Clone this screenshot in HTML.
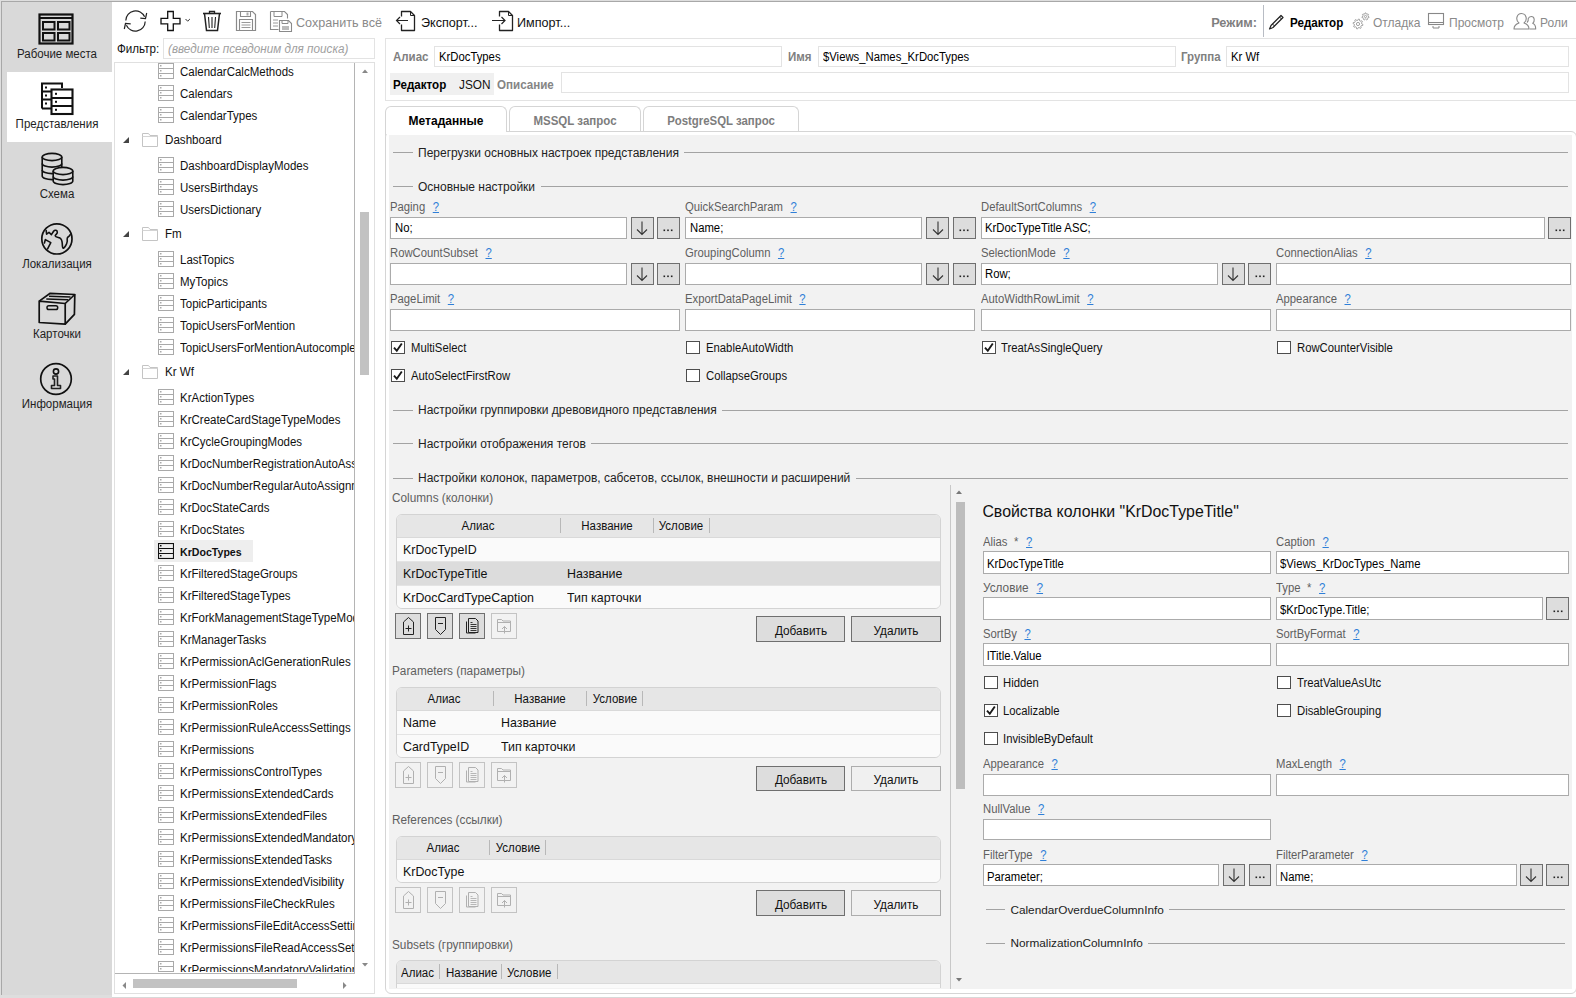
<!DOCTYPE html><html><head><meta charset="utf-8"><style>
html,body{margin:0;padding:0;width:1576px;height:998px;overflow:hidden;background:#fff;}
body{position:relative;font-family:"Liberation Sans",sans-serif;}
.t{position:absolute;white-space:nowrap;}
.r{position:absolute;}
</style></head><body><div class="r" style="left:0.00px;top:0.00px;width:1576.00px;height:998.00px;background:#ffffff;"></div><div class="r" style="left:0.00px;top:0.00px;width:112.00px;height:998.00px;background:#d9d9d9;"></div><div class="r" style="left:0.00px;top:0.00px;width:1.00px;height:998.00px;background:#dedede;"></div><div class="r" style="left:1.00px;top:1.00px;width:1.00px;height:994.00px;background:#a8a8a8;"></div><div class="r" style="left:7.00px;top:72.00px;width:105.00px;height:70.00px;background:#ffffff;"></div><div class="t" style="left:-143.00px;width:400px;text-align:center;transform-origin:50% 0;top:48.44px;font-size:12.00px;line-height:12.00px;color:#1e1e1e;font-weight:400;transform:scaleX(0.9583);">Рабочие места</div><div class="t" style="left:-143.00px;width:400px;text-align:center;transform-origin:50% 0;top:118.44px;font-size:12.00px;line-height:12.00px;color:#1e1e1e;font-weight:400;transform:scaleX(0.9583);">Представления</div><div class="t" style="left:-143.00px;width:400px;text-align:center;transform-origin:50% 0;top:188.44px;font-size:12.00px;line-height:12.00px;color:#1e1e1e;font-weight:400;transform:scaleX(0.9583);">Схема</div><div class="t" style="left:-143.00px;width:400px;text-align:center;transform-origin:50% 0;top:258.44px;font-size:12.00px;line-height:12.00px;color:#1e1e1e;font-weight:400;transform:scaleX(0.9583);">Локализация</div><div class="t" style="left:-143.00px;width:400px;text-align:center;transform-origin:50% 0;top:328.44px;font-size:12.00px;line-height:12.00px;color:#1e1e1e;font-weight:400;transform:scaleX(0.9583);">Карточки</div><div class="t" style="left:-143.00px;width:400px;text-align:center;transform-origin:50% 0;top:398.44px;font-size:12.00px;line-height:12.00px;color:#1e1e1e;font-weight:400;transform:scaleX(0.9583);">Информация</div><svg class="r" style="left:38px;top:13px" width="36" height="32" viewBox="0 0 36 32" fill="none"><rect x="1.5" y="1.5" width="33" height="29" stroke="#111" stroke-width="2.2"/>
<line x1="1.5" y1="5" x2="34.5" y2="5" stroke="#111" stroke-width="2"/>
<rect x="5" y="9" width="11.5" height="7.5" stroke="#111" stroke-width="2"/>
<rect x="20" y="9" width="11.5" height="7.5" stroke="#111" stroke-width="2"/>
<rect x="5" y="20" width="11.5" height="7.5" stroke="#111" stroke-width="2"/>
<rect x="20" y="20" width="11.5" height="7.5" stroke="#111" stroke-width="2"/></svg><svg class="r" style="left:41px;top:82px" width="34" height="34" viewBox="0 0 34 34" fill="none"><g stroke="#111" stroke-width="2" fill="none">
<path d="M1 26.5V1.5H21V6"/><path d="M1 26.5H10M1 9.5H10M1 17.5H10"/>
<rect x="10.5" y="7.5" width="21" height="24.5" stroke-width="2.1"/>
<path d="M10.5 16H31.5M10.5 24H31.5"/></g>
<g fill="#111"><rect x="4" y="4.5" width="2" height="2"/><rect x="4" y="12.5" width="2" height="2"/><rect x="4" y="20.5" width="2" height="2"/>
<rect x="14" y="10.8" width="2" height="2"/><rect x="14" y="18.8" width="2" height="2"/><rect x="14" y="26.8" width="2" height="2"/></g></svg><svg class="r" style="left:41px;top:152px" width="34" height="34" viewBox="0 0 34 34" fill="none"><g stroke="#111" stroke-width="1.6" fill="#d9d9d9">
<path d="M1.2 5v19c0 2 4.4 3.6 9.8 3.6s9.8-1.6 9.8-3.6V5"/>
<ellipse cx="11" cy="5" rx="9.8" ry="3.6"/>
<path d="M1.2 11.5c0 2 4.4 3.6 9.8 3.6s9.8-1.6 9.8-3.6M1.2 18c0 2 4.4 3.6 9.8 3.6s9.8-1.6 9.8-3.6" fill="none"/>
<path d="M12.2 19v10c0 2 4.4 3.6 9.8 3.6s9.8-1.6 9.8-3.6V19"/>
<ellipse cx="22" cy="19" rx="9.8" ry="3.6"/>
<path d="M12.2 24.5c0 2 4.4 3.6 9.8 3.6s9.8-1.6 9.8-3.6" fill="none"/>
</g></svg><svg class="r" style="left:40px;top:222px" width="34" height="34" viewBox="0 0 34 34" fill="none"><circle cx="16.9" cy="16.9" r="15.1" stroke="#111" stroke-width="1.7"/>
<path d="M6.2 8.6L6.6 12.2 9 10.4 11.4 12.6 13.6 9.2C14.8 7.6 17.6 8 17.3 10.6 17.1 12 15.4 12.6 15.2 13.8 15.4 15 18 15.3 19.5 15.8 21.8 16.8 22.2 19.5 22.3 22 22.4 24 22.2 26 23.4 26.3 24.6 25.6 26.8 22.5 27.2 19.5 27.6 17.8 26.3 16.2 28 15 29.2 14.2 29.8 13.4 30.2 12.6" stroke="#111" stroke-width="1.6" fill="none" stroke-linejoin="round" stroke-linecap="round"/>
<path d="M4.4 21L5.4 17.6 10.8 20.6 7.6 26.8" stroke="#111" stroke-width="1.6" fill="none" stroke-linejoin="round" stroke-linecap="round"/></svg><svg class="r" style="left:38px;top:292px" width="40" height="34" viewBox="0 0 40 34" fill="none"><g stroke="#111" stroke-width="1.7" fill="none" stroke-linejoin="round">
<path d="M1.2 9.1L27.2 11.5 27.2 32.2 1.2 30.5Z"/>
<path d="M1.2 9.1L12.2 1.3 36.8 2.5 27.2 11.5"/>
<path d="M36.8 2.5L36.4 22.4 27.2 32.2"/>
<path d="M11 4.3L32.5 5.1M8.3 6.9L30 7.7" stroke-width="1.5"/>
<rect x="9" y="13.8" width="10.7" height="3.7" rx="1.8" stroke-width="1.5"/></g></svg><svg class="r" style="left:39px;top:362px" width="34" height="34" viewBox="0 0 34 34" fill="none"><circle cx="17" cy="17" r="15.3" stroke="#111" stroke-width="1.7"/>
<circle cx="17" cy="9.5" r="2.6" stroke="#111" stroke-width="1.6"/>
<path d="M14 14h4.5v9.5h3v3h-9v-3h3v-6.5h-1.5z" stroke="#222" stroke-width="1.6" fill="none" stroke-linejoin="round"/></svg><div class="r" style="left:0.00px;top:0.00px;width:1576.00px;height:1.00px;background:#dedede;"></div><div class="r" style="left:1.00px;top:1.00px;width:1575.00px;height:1.00px;background:#a8a8a8;"></div><div class="r" style="left:0.00px;top:995.00px;width:112.00px;height:3.00px;background:#dedede;"></div><svg class="r" style="left:122px;top:10px" width="28" height="22" viewBox="0 0 28 22" fill="none"><path d="M3.8 10.5A9.8 9.8 0 0 1 22.6 6.8" stroke="#222" stroke-width="1.2" fill="none"/>
<path d="M23.2 11.5A9.8 9.8 0 0 1 4.4 15.2" stroke="#222" stroke-width="1.2" fill="none"/>
<path d="M18.3 8.2l5.2 0.3 1.2-5.5" stroke="#222" stroke-width="1.2" fill="none"/>
<path d="M8.7 13.8l-5.2-0.3-1.2 5.5" stroke="#222" stroke-width="1.2" fill="none"/></svg><svg class="r" style="left:160px;top:10px" width="32" height="22" viewBox="0 0 32 22" fill="none"><path d="M7.7 1.5h5.6v6.8h6.7v5.5h-6.7v6.7h-5.6v-6.7h-6.7v-5.5h6.7z" stroke="#111" stroke-width="1.3" fill="#fff" stroke-linejoin="miter"/>
<path d="M25.5 9l2.2 2.2 2.2-2.2" stroke="#333" stroke-width="1" fill="none"/></svg><svg class="r" style="left:201px;top:10px" width="22" height="22" viewBox="0 0 22 22" fill="none"><path d="M2 3.5h18" stroke="#222" stroke-width="1.6"/>
<path d="M8.5 3.5V1.5h5v2" stroke="#222" stroke-width="1.3" fill="none"/>
<path d="M3.5 3.5l2 17h11l2-17" stroke="#222" stroke-width="1.5" fill="none"/>
<path d="M7.5 7l0.8 11M11 7v11M14.5 7l-0.8 11" stroke="#222" stroke-width="1.1"/></svg><svg class="r" style="left:235px;top:10px" width="22" height="22" viewBox="0 0 22 22" fill="none"><path d="M1.5 1.5h16l3 3v16h-19z" stroke="#8a8a8a" stroke-width="1.2" fill="#fff"/>
<path d="M5.5 1.5v5h10v-5" stroke="#8a8a8a" stroke-width="1.1" fill="none"/>
<rect x="11.5" y="2.5" width="2" height="3" fill="#aaa"/>
<path d="M4.5 20.5v-11h13v11" stroke="#8a8a8a" stroke-width="1.1" fill="none"/>
<path d="M6.5 12.5h9M6.5 15h9M6.5 17.5h9" stroke="#9a9a9a" stroke-width="1"/></svg><svg class="r" style="left:269px;top:10px" width="24" height="22" viewBox="0 0 24 22" fill="none"><path d="M1.5 1.5h14l3 3v4" stroke="#8a8a8a" stroke-width="1.1" fill="none"/>
<path d="M1.5 1.5v18h8" stroke="#8a8a8a" stroke-width="1.1" fill="none"/>
<path d="M5 1.5v5h8v-5" stroke="#8a8a8a" stroke-width="1" fill="none"/>
<path d="M4 10h5M4 13h5M4 16h5" stroke="#9a9a9a" stroke-width="1"/>
<path d="M10.5 10.5h9l3 3v8h-12z" stroke="#8a8a8a" stroke-width="1.1" fill="#fff"/>
<path d="M13 10.5v3h6v-3" stroke="#8a8a8a" stroke-width="1" fill="none"/>
<rect x="13" y="16" width="7" height="4" fill="#bbb"/></svg><div class="t" style="left:296.00px;transform-origin:0 0;top:15.60px;font-size:13.00px;line-height:13.00px;color:#8a8a8a;font-weight:400;transform:scaleX(0.9692);">Сохранить всё</div><svg class="r" style="left:395px;top:10px" width="22" height="22" viewBox="0 0 22 22" fill="none"><path d="M6.5 6.5v-5h9l4 4v15h-13v-6" stroke="#222" stroke-width="1.3" fill="none" stroke-linejoin="round"/>
<path d="M15.5 1.5v4h4" stroke="#222" stroke-width="1" fill="none"/>
<path d="M13 10.5H1.5M5 7l-3.5 3.5L5 14" stroke="#222" stroke-width="1.2" fill="none"/></svg><div class="t" style="left:421.00px;transform-origin:0 0;top:15.60px;font-size:13.00px;line-height:13.00px;color:#111;font-weight:400;transform:scaleX(0.9692);">Экспорт...</div><svg class="r" style="left:491px;top:10px" width="23" height="22" viewBox="0 0 23 22" fill="none"><path d="M8.5 6.5v-5h9l4 4v15h-13v-6" stroke="#222" stroke-width="1.3" fill="none" stroke-linejoin="round"/>
<path d="M17.5 1.5v4h4" stroke="#222" stroke-width="1" fill="none"/>
<path d="M1 10.5h13M10.5 7l3.5 3.5-3.5 3.5" stroke="#222" stroke-width="1.2" fill="none"/></svg><div class="t" style="left:517.00px;transform-origin:0 0;top:15.60px;font-size:13.00px;line-height:13.00px;color:#111;font-weight:400;transform:scaleX(0.9692);">Импорт...</div><div class="t" style="left:857.00px;width:400px;text-align:right;transform-origin:100% 0;top:16.10px;font-size:13.00px;line-height:13.00px;color:#7f7f7f;font-weight:700;transform:scaleX(0.9846);">Режим:</div><div class="r" style="left:1263.00px;top:5.00px;width:1.00px;height:32.00px;background:#b8bcc4;"></div><svg class="r" style="left:1268px;top:12px" width="18" height="18" viewBox="0 0 18 18" fill="none"><path d="M3 13.5L13 3.5l2 2-10 10-3.5 1.5z" stroke="#222" stroke-width="1.2" fill="#fff" stroke-linejoin="round"/>
<path d="M11.5 5l2 2M4.5 12l2 2" stroke="#222" stroke-width="1"/></svg><div class="t" style="left:1289.50px;transform-origin:0 0;top:16.94px;font-size:12.00px;line-height:12.00px;color:#000;font-weight:700;transform:scaleX(0.9667);">Редактор</div><svg class="r" style="left:1352px;top:12px" width="18" height="18" viewBox="0 0 18 18" fill="none"><path d="M10.98 12.49 L10.78 13.45 L9.17 13.70 L8.78 14.28 L9.17 15.87 L8.36 16.41 L7.05 15.44 L6.35 15.58 L5.51 16.98 L4.55 16.78 L4.30 15.17 L3.72 14.78 L2.13 15.17 L1.59 14.36 L2.56 13.05 L2.42 12.35 L1.02 11.51 L1.22 10.55 L2.83 10.30 L3.22 9.72 L2.83 8.13 L3.64 7.59 L4.95 8.56 L5.65 8.42 L6.49 7.02 L7.45 7.22 L7.70 8.83 L8.28 9.22 L9.87 8.83 L10.41 9.64 L9.44 10.95 L9.58 11.65Z" stroke="#999" stroke-width="0.9" fill="none" stroke-linejoin="round"/><circle cx="6" cy="12" r="1.6" stroke="#999" stroke-width="0.9"/><path d="M17.08 4.90 L16.90 5.69 L15.70 5.88 L15.34 6.34 L15.42 7.55 L14.69 7.90 L13.79 7.08 L13.21 7.08 L12.31 7.90 L11.58 7.55 L11.66 6.34 L11.30 5.88 L10.10 5.69 L9.92 4.90 L10.92 4.21 L11.05 3.64 L10.45 2.58 L10.95 1.95 L12.12 2.30 L12.64 2.05 L13.10 0.92 L13.90 0.92 L14.36 2.05 L14.88 2.30 L16.05 1.95 L16.55 2.58 L15.95 3.64 L16.08 4.21Z" stroke="#999" stroke-width="0.9" fill="none" stroke-linejoin="round"/><circle cx="13.5" cy="4.5" r="1.1" stroke="#999" stroke-width="0.9"/></svg><div class="t" style="left:1373.00px;transform-origin:0 0;top:16.10px;font-size:13.00px;line-height:13.00px;color:#8a8a8a;font-weight:400;transform:scaleX(0.9231);">Отладка</div><svg class="r" style="left:1427px;top:12px" width="18" height="18" viewBox="0 0 18 18" fill="none"><rect x="1.5" y="1.5" width="15" height="11" stroke="#888" stroke-width="1.1" fill="#fff"/>
<path d="M1.5 10.5h15" stroke="#888" stroke-width="1"/>
<path d="M6 14v2h6v-2" stroke="#888" stroke-width="1" fill="none"/></svg><div class="t" style="left:1448.60px;transform-origin:0 0;top:16.10px;font-size:13.00px;line-height:13.00px;color:#8a8a8a;font-weight:400;transform:scaleX(0.9231);">Просмотр</div><svg class="r" style="left:1513px;top:12px" width="24" height="18" viewBox="0 0 24 18" fill="none"><path d="M1 17c0-3 2-5 5-6-2-1.5-2.5-4-2-6 0.7-2.5 2.5-3.5 4.5-3.5s3.8 1 4.5 3.5c0.5 2 0 4.5-2 6 3 1 5 3 5 6z" stroke="#888" stroke-width="1.1" fill="#fff" stroke-linejoin="round"/>
<path d="M14 10.5c1-1 1.5-2.5 1.2-3.8 0.5-1.5 1.8-2.2 3-2.2 1.6 0 2.8 1.2 3 2.8 0.2 1.5-0.3 3-1.5 4 2 0.8 3 2.5 3 5.7h-6" stroke="#888" stroke-width="1.1" fill="none" stroke-linejoin="round"/></svg><div class="t" style="left:1540.00px;transform-origin:0 0;top:16.10px;font-size:13.00px;line-height:13.00px;color:#8a8a8a;font-weight:400;transform:scaleX(0.9231);">Роли</div><div class="t" style="left:117.00px;transform-origin:0 0;top:42.94px;font-size:12.00px;line-height:12.00px;color:#111;font-weight:400;transform:scaleX(0.9667);">Фильтр:</div><div class="r" style="left:163.00px;top:37.50px;width:211.50px;height:21.50px;background:#fff;border:1px solid #e3e3e3;box-sizing:border-box;"></div><div class="t" style="left:168.00px;transform-origin:0 0;top:42.94px;font-size:12.00px;line-height:12.00px;color:#a0a0a0;font-weight:400;transform:scaleX(0.9750);font-style:italic;">(введите псевдоним для поиска)</div><div class="r" style="left:114.00px;top:62.00px;width:261.00px;height:932.00px;background:#fff;border:1px solid #e0e0e0;box-sizing:border-box;"></div><div class="r" style="left:115px;top:63px;width:239.5px;height:909px;overflow:hidden;"><svg class="r" style="left:43px;top:0px" width="16" height="16" viewBox="0 0 16 16" fill="none"><rect x="0.5" y="0.5" width="15" height="15" stroke="#a9a9a9" stroke-width="1"/><path d="M0.5 5.5h15M0.5 10.5h15" stroke="#a9a9a9" stroke-width="1"/><rect x="2" y="2" width="1.5" height="1.5" fill="#a9a9a9"/><rect x="2" y="7" width="1.5" height="1.5" fill="#a9a9a9"/><rect x="2" y="12" width="1.5" height="1.5" fill="#a9a9a9"/></svg><div class="t" style="left:65px;top:3.34px;font-size:12.00px;line-height:12.00px;color:#111;font-weight:400;transform-origin:0 0;transform:scaleX(0.9583)">CalendarCalcMethods</div><svg class="r" style="left:43px;top:22px" width="16" height="16" viewBox="0 0 16 16" fill="none"><rect x="0.5" y="0.5" width="15" height="15" stroke="#a9a9a9" stroke-width="1"/><path d="M0.5 5.5h15M0.5 10.5h15" stroke="#a9a9a9" stroke-width="1"/><rect x="2" y="2" width="1.5" height="1.5" fill="#a9a9a9"/><rect x="2" y="7" width="1.5" height="1.5" fill="#a9a9a9"/><rect x="2" y="12" width="1.5" height="1.5" fill="#a9a9a9"/></svg><div class="t" style="left:65px;top:25.34px;font-size:12.00px;line-height:12.00px;color:#111;font-weight:400;transform-origin:0 0;transform:scaleX(0.9583)">Calendars</div><svg class="r" style="left:43px;top:44px" width="16" height="16" viewBox="0 0 16 16" fill="none"><rect x="0.5" y="0.5" width="15" height="15" stroke="#a9a9a9" stroke-width="1"/><path d="M0.5 5.5h15M0.5 10.5h15" stroke="#a9a9a9" stroke-width="1"/><rect x="2" y="2" width="1.5" height="1.5" fill="#a9a9a9"/><rect x="2" y="7" width="1.5" height="1.5" fill="#a9a9a9"/><rect x="2" y="12" width="1.5" height="1.5" fill="#a9a9a9"/></svg><div class="t" style="left:65px;top:47.34px;font-size:12.00px;line-height:12.00px;color:#111;font-weight:400;transform-origin:0 0;transform:scaleX(0.9583)">CalendarTypes</div><svg class="r" style="left:7px;top:73px" width="8" height="8" viewBox="0 0 8 8"><path d="M7 1v6H1z" fill="#444"/></svg><svg class="r" style="left:27px;top:70px" width="16" height="14" viewBox="0 0 16 14" fill="none"><path d="M0.5 13.5V0.5h6l1.5 2h7.5v11z" stroke="#c4c4c4" stroke-width="1" fill="#fff"/><path d="M0.5 3.5h15" stroke="#d4d4d4" stroke-width="1"/></svg><div class="t" style="left:49.5px;top:70.84px;font-size:12px;line-height:12px;color:#111;transform-origin:0 0;transform:scaleX(0.9667)">Dashboard</div><svg class="r" style="left:43px;top:94px" width="16" height="16" viewBox="0 0 16 16" fill="none"><rect x="0.5" y="0.5" width="15" height="15" stroke="#a9a9a9" stroke-width="1"/><path d="M0.5 5.5h15M0.5 10.5h15" stroke="#a9a9a9" stroke-width="1"/><rect x="2" y="2" width="1.5" height="1.5" fill="#a9a9a9"/><rect x="2" y="7" width="1.5" height="1.5" fill="#a9a9a9"/><rect x="2" y="12" width="1.5" height="1.5" fill="#a9a9a9"/></svg><div class="t" style="left:65px;top:97.34px;font-size:12.00px;line-height:12.00px;color:#111;font-weight:400;transform-origin:0 0;transform:scaleX(0.9583)">DashboardDisplayModes</div><svg class="r" style="left:43px;top:116px" width="16" height="16" viewBox="0 0 16 16" fill="none"><rect x="0.5" y="0.5" width="15" height="15" stroke="#a9a9a9" stroke-width="1"/><path d="M0.5 5.5h15M0.5 10.5h15" stroke="#a9a9a9" stroke-width="1"/><rect x="2" y="2" width="1.5" height="1.5" fill="#a9a9a9"/><rect x="2" y="7" width="1.5" height="1.5" fill="#a9a9a9"/><rect x="2" y="12" width="1.5" height="1.5" fill="#a9a9a9"/></svg><div class="t" style="left:65px;top:119.34px;font-size:12.00px;line-height:12.00px;color:#111;font-weight:400;transform-origin:0 0;transform:scaleX(0.9583)">UsersBirthdays</div><svg class="r" style="left:43px;top:138px" width="16" height="16" viewBox="0 0 16 16" fill="none"><rect x="0.5" y="0.5" width="15" height="15" stroke="#a9a9a9" stroke-width="1"/><path d="M0.5 5.5h15M0.5 10.5h15" stroke="#a9a9a9" stroke-width="1"/><rect x="2" y="2" width="1.5" height="1.5" fill="#a9a9a9"/><rect x="2" y="7" width="1.5" height="1.5" fill="#a9a9a9"/><rect x="2" y="12" width="1.5" height="1.5" fill="#a9a9a9"/></svg><div class="t" style="left:65px;top:141.34px;font-size:12.00px;line-height:12.00px;color:#111;font-weight:400;transform-origin:0 0;transform:scaleX(0.9583)">UsersDictionary</div><svg class="r" style="left:7px;top:167px" width="8" height="8" viewBox="0 0 8 8"><path d="M7 1v6H1z" fill="#444"/></svg><svg class="r" style="left:27px;top:164px" width="16" height="14" viewBox="0 0 16 14" fill="none"><path d="M0.5 13.5V0.5h6l1.5 2h7.5v11z" stroke="#c4c4c4" stroke-width="1" fill="#fff"/><path d="M0.5 3.5h15" stroke="#d4d4d4" stroke-width="1"/></svg><div class="t" style="left:49.5px;top:164.84px;font-size:12px;line-height:12px;color:#111;transform-origin:0 0;transform:scaleX(0.9667)">Fm</div><svg class="r" style="left:43px;top:188px" width="16" height="16" viewBox="0 0 16 16" fill="none"><rect x="0.5" y="0.5" width="15" height="15" stroke="#a9a9a9" stroke-width="1"/><path d="M0.5 5.5h15M0.5 10.5h15" stroke="#a9a9a9" stroke-width="1"/><rect x="2" y="2" width="1.5" height="1.5" fill="#a9a9a9"/><rect x="2" y="7" width="1.5" height="1.5" fill="#a9a9a9"/><rect x="2" y="12" width="1.5" height="1.5" fill="#a9a9a9"/></svg><div class="t" style="left:65px;top:191.34px;font-size:12.00px;line-height:12.00px;color:#111;font-weight:400;transform-origin:0 0;transform:scaleX(0.9583)">LastTopics</div><svg class="r" style="left:43px;top:210px" width="16" height="16" viewBox="0 0 16 16" fill="none"><rect x="0.5" y="0.5" width="15" height="15" stroke="#a9a9a9" stroke-width="1"/><path d="M0.5 5.5h15M0.5 10.5h15" stroke="#a9a9a9" stroke-width="1"/><rect x="2" y="2" width="1.5" height="1.5" fill="#a9a9a9"/><rect x="2" y="7" width="1.5" height="1.5" fill="#a9a9a9"/><rect x="2" y="12" width="1.5" height="1.5" fill="#a9a9a9"/></svg><div class="t" style="left:65px;top:213.34px;font-size:12.00px;line-height:12.00px;color:#111;font-weight:400;transform-origin:0 0;transform:scaleX(0.9583)">MyTopics</div><svg class="r" style="left:43px;top:232px" width="16" height="16" viewBox="0 0 16 16" fill="none"><rect x="0.5" y="0.5" width="15" height="15" stroke="#a9a9a9" stroke-width="1"/><path d="M0.5 5.5h15M0.5 10.5h15" stroke="#a9a9a9" stroke-width="1"/><rect x="2" y="2" width="1.5" height="1.5" fill="#a9a9a9"/><rect x="2" y="7" width="1.5" height="1.5" fill="#a9a9a9"/><rect x="2" y="12" width="1.5" height="1.5" fill="#a9a9a9"/></svg><div class="t" style="left:65px;top:235.34px;font-size:12.00px;line-height:12.00px;color:#111;font-weight:400;transform-origin:0 0;transform:scaleX(0.9583)">TopicParticipants</div><svg class="r" style="left:43px;top:254px" width="16" height="16" viewBox="0 0 16 16" fill="none"><rect x="0.5" y="0.5" width="15" height="15" stroke="#a9a9a9" stroke-width="1"/><path d="M0.5 5.5h15M0.5 10.5h15" stroke="#a9a9a9" stroke-width="1"/><rect x="2" y="2" width="1.5" height="1.5" fill="#a9a9a9"/><rect x="2" y="7" width="1.5" height="1.5" fill="#a9a9a9"/><rect x="2" y="12" width="1.5" height="1.5" fill="#a9a9a9"/></svg><div class="t" style="left:65px;top:257.34px;font-size:12.00px;line-height:12.00px;color:#111;font-weight:400;transform-origin:0 0;transform:scaleX(0.9583)">TopicUsersForMention</div><svg class="r" style="left:43px;top:276px" width="16" height="16" viewBox="0 0 16 16" fill="none"><rect x="0.5" y="0.5" width="15" height="15" stroke="#a9a9a9" stroke-width="1"/><path d="M0.5 5.5h15M0.5 10.5h15" stroke="#a9a9a9" stroke-width="1"/><rect x="2" y="2" width="1.5" height="1.5" fill="#a9a9a9"/><rect x="2" y="7" width="1.5" height="1.5" fill="#a9a9a9"/><rect x="2" y="12" width="1.5" height="1.5" fill="#a9a9a9"/></svg><div class="t" style="left:65px;top:279.34px;font-size:12.00px;line-height:12.00px;color:#111;font-weight:400;transform-origin:0 0;transform:scaleX(0.9583)">TopicUsersForMentionAutocomplete</div><svg class="r" style="left:7px;top:305px" width="8" height="8" viewBox="0 0 8 8"><path d="M7 1v6H1z" fill="#444"/></svg><svg class="r" style="left:27px;top:302px" width="16" height="14" viewBox="0 0 16 14" fill="none"><path d="M0.5 13.5V0.5h6l1.5 2h7.5v11z" stroke="#c4c4c4" stroke-width="1" fill="#fff"/><path d="M0.5 3.5h15" stroke="#d4d4d4" stroke-width="1"/></svg><div class="t" style="left:49.5px;top:302.84px;font-size:12px;line-height:12px;color:#111;transform-origin:0 0;transform:scaleX(0.9667)">Kr Wf</div><svg class="r" style="left:43px;top:326px" width="16" height="16" viewBox="0 0 16 16" fill="none"><rect x="0.5" y="0.5" width="15" height="15" stroke="#a9a9a9" stroke-width="1"/><path d="M0.5 5.5h15M0.5 10.5h15" stroke="#a9a9a9" stroke-width="1"/><rect x="2" y="2" width="1.5" height="1.5" fill="#a9a9a9"/><rect x="2" y="7" width="1.5" height="1.5" fill="#a9a9a9"/><rect x="2" y="12" width="1.5" height="1.5" fill="#a9a9a9"/></svg><div class="t" style="left:65px;top:329.34px;font-size:12.00px;line-height:12.00px;color:#111;font-weight:400;transform-origin:0 0;transform:scaleX(0.9583)">KrActionTypes</div><svg class="r" style="left:43px;top:348px" width="16" height="16" viewBox="0 0 16 16" fill="none"><rect x="0.5" y="0.5" width="15" height="15" stroke="#a9a9a9" stroke-width="1"/><path d="M0.5 5.5h15M0.5 10.5h15" stroke="#a9a9a9" stroke-width="1"/><rect x="2" y="2" width="1.5" height="1.5" fill="#a9a9a9"/><rect x="2" y="7" width="1.5" height="1.5" fill="#a9a9a9"/><rect x="2" y="12" width="1.5" height="1.5" fill="#a9a9a9"/></svg><div class="t" style="left:65px;top:351.34px;font-size:12.00px;line-height:12.00px;color:#111;font-weight:400;transform-origin:0 0;transform:scaleX(0.9583)">KrCreateCardStageTypeModes</div><svg class="r" style="left:43px;top:370px" width="16" height="16" viewBox="0 0 16 16" fill="none"><rect x="0.5" y="0.5" width="15" height="15" stroke="#a9a9a9" stroke-width="1"/><path d="M0.5 5.5h15M0.5 10.5h15" stroke="#a9a9a9" stroke-width="1"/><rect x="2" y="2" width="1.5" height="1.5" fill="#a9a9a9"/><rect x="2" y="7" width="1.5" height="1.5" fill="#a9a9a9"/><rect x="2" y="12" width="1.5" height="1.5" fill="#a9a9a9"/></svg><div class="t" style="left:65px;top:373.34px;font-size:12.00px;line-height:12.00px;color:#111;font-weight:400;transform-origin:0 0;transform:scaleX(0.9583)">KrCycleGroupingModes</div><svg class="r" style="left:43px;top:392px" width="16" height="16" viewBox="0 0 16 16" fill="none"><rect x="0.5" y="0.5" width="15" height="15" stroke="#a9a9a9" stroke-width="1"/><path d="M0.5 5.5h15M0.5 10.5h15" stroke="#a9a9a9" stroke-width="1"/><rect x="2" y="2" width="1.5" height="1.5" fill="#a9a9a9"/><rect x="2" y="7" width="1.5" height="1.5" fill="#a9a9a9"/><rect x="2" y="12" width="1.5" height="1.5" fill="#a9a9a9"/></svg><div class="t" style="left:65px;top:395.34px;font-size:12.00px;line-height:12.00px;color:#111;font-weight:400;transform-origin:0 0;transform:scaleX(0.9583)">KrDocNumberRegistrationAutoAssignment</div><svg class="r" style="left:43px;top:414px" width="16" height="16" viewBox="0 0 16 16" fill="none"><rect x="0.5" y="0.5" width="15" height="15" stroke="#a9a9a9" stroke-width="1"/><path d="M0.5 5.5h15M0.5 10.5h15" stroke="#a9a9a9" stroke-width="1"/><rect x="2" y="2" width="1.5" height="1.5" fill="#a9a9a9"/><rect x="2" y="7" width="1.5" height="1.5" fill="#a9a9a9"/><rect x="2" y="12" width="1.5" height="1.5" fill="#a9a9a9"/></svg><div class="t" style="left:65px;top:417.34px;font-size:12.00px;line-height:12.00px;color:#111;font-weight:400;transform-origin:0 0;transform:scaleX(0.9583)">KrDocNumberRegularAutoAssignment</div><svg class="r" style="left:43px;top:436px" width="16" height="16" viewBox="0 0 16 16" fill="none"><rect x="0.5" y="0.5" width="15" height="15" stroke="#a9a9a9" stroke-width="1"/><path d="M0.5 5.5h15M0.5 10.5h15" stroke="#a9a9a9" stroke-width="1"/><rect x="2" y="2" width="1.5" height="1.5" fill="#a9a9a9"/><rect x="2" y="7" width="1.5" height="1.5" fill="#a9a9a9"/><rect x="2" y="12" width="1.5" height="1.5" fill="#a9a9a9"/></svg><div class="t" style="left:65px;top:439.34px;font-size:12.00px;line-height:12.00px;color:#111;font-weight:400;transform-origin:0 0;transform:scaleX(0.9583)">KrDocStateCards</div><svg class="r" style="left:43px;top:458px" width="16" height="16" viewBox="0 0 16 16" fill="none"><rect x="0.5" y="0.5" width="15" height="15" stroke="#a9a9a9" stroke-width="1"/><path d="M0.5 5.5h15M0.5 10.5h15" stroke="#a9a9a9" stroke-width="1"/><rect x="2" y="2" width="1.5" height="1.5" fill="#a9a9a9"/><rect x="2" y="7" width="1.5" height="1.5" fill="#a9a9a9"/><rect x="2" y="12" width="1.5" height="1.5" fill="#a9a9a9"/></svg><div class="t" style="left:65px;top:461.34px;font-size:12.00px;line-height:12.00px;color:#111;font-weight:400;transform-origin:0 0;transform:scaleX(0.9583)">KrDocStates</div><div class="r" style="left:39px;top:477px;width:99px;height:22px;background:#eeeeee"></div><svg class="r" style="left:43px;top:480px" width="16" height="16" viewBox="0 0 16 16" fill="none"><rect x="0.5" y="0.5" width="15" height="15" stroke="#111" stroke-width="1.15"/><path d="M0.5 5.5h15M0.5 10.5h15" stroke="#111" stroke-width="1.15"/><rect x="2" y="2" width="1.5" height="1.5" fill="#111"/><rect x="2" y="7" width="1.5" height="1.5" fill="#111"/><rect x="2" y="12" width="1.5" height="1.5" fill="#111"/></svg><div class="t" style="left:65px;top:483.77px;font-size:11.50px;line-height:11.50px;color:#111;font-weight:700;transform-origin:0 0;transform:scaleX(0.9217)">KrDocTypes</div><svg class="r" style="left:43px;top:502px" width="16" height="16" viewBox="0 0 16 16" fill="none"><rect x="0.5" y="0.5" width="15" height="15" stroke="#a9a9a9" stroke-width="1"/><path d="M0.5 5.5h15M0.5 10.5h15" stroke="#a9a9a9" stroke-width="1"/><rect x="2" y="2" width="1.5" height="1.5" fill="#a9a9a9"/><rect x="2" y="7" width="1.5" height="1.5" fill="#a9a9a9"/><rect x="2" y="12" width="1.5" height="1.5" fill="#a9a9a9"/></svg><div class="t" style="left:65px;top:505.34px;font-size:12.00px;line-height:12.00px;color:#111;font-weight:400;transform-origin:0 0;transform:scaleX(0.9583)">KrFilteredStageGroups</div><svg class="r" style="left:43px;top:524px" width="16" height="16" viewBox="0 0 16 16" fill="none"><rect x="0.5" y="0.5" width="15" height="15" stroke="#a9a9a9" stroke-width="1"/><path d="M0.5 5.5h15M0.5 10.5h15" stroke="#a9a9a9" stroke-width="1"/><rect x="2" y="2" width="1.5" height="1.5" fill="#a9a9a9"/><rect x="2" y="7" width="1.5" height="1.5" fill="#a9a9a9"/><rect x="2" y="12" width="1.5" height="1.5" fill="#a9a9a9"/></svg><div class="t" style="left:65px;top:527.34px;font-size:12.00px;line-height:12.00px;color:#111;font-weight:400;transform-origin:0 0;transform:scaleX(0.9583)">KrFilteredStageTypes</div><svg class="r" style="left:43px;top:546px" width="16" height="16" viewBox="0 0 16 16" fill="none"><rect x="0.5" y="0.5" width="15" height="15" stroke="#a9a9a9" stroke-width="1"/><path d="M0.5 5.5h15M0.5 10.5h15" stroke="#a9a9a9" stroke-width="1"/><rect x="2" y="2" width="1.5" height="1.5" fill="#a9a9a9"/><rect x="2" y="7" width="1.5" height="1.5" fill="#a9a9a9"/><rect x="2" y="12" width="1.5" height="1.5" fill="#a9a9a9"/></svg><div class="t" style="left:65px;top:549.34px;font-size:12.00px;line-height:12.00px;color:#111;font-weight:400;transform-origin:0 0;transform:scaleX(0.9583)">KrForkManagementStageTypeModes</div><svg class="r" style="left:43px;top:568px" width="16" height="16" viewBox="0 0 16 16" fill="none"><rect x="0.5" y="0.5" width="15" height="15" stroke="#a9a9a9" stroke-width="1"/><path d="M0.5 5.5h15M0.5 10.5h15" stroke="#a9a9a9" stroke-width="1"/><rect x="2" y="2" width="1.5" height="1.5" fill="#a9a9a9"/><rect x="2" y="7" width="1.5" height="1.5" fill="#a9a9a9"/><rect x="2" y="12" width="1.5" height="1.5" fill="#a9a9a9"/></svg><div class="t" style="left:65px;top:571.34px;font-size:12.00px;line-height:12.00px;color:#111;font-weight:400;transform-origin:0 0;transform:scaleX(0.9583)">KrManagerTasks</div><svg class="r" style="left:43px;top:590px" width="16" height="16" viewBox="0 0 16 16" fill="none"><rect x="0.5" y="0.5" width="15" height="15" stroke="#a9a9a9" stroke-width="1"/><path d="M0.5 5.5h15M0.5 10.5h15" stroke="#a9a9a9" stroke-width="1"/><rect x="2" y="2" width="1.5" height="1.5" fill="#a9a9a9"/><rect x="2" y="7" width="1.5" height="1.5" fill="#a9a9a9"/><rect x="2" y="12" width="1.5" height="1.5" fill="#a9a9a9"/></svg><div class="t" style="left:65px;top:593.34px;font-size:12.00px;line-height:12.00px;color:#111;font-weight:400;transform-origin:0 0;transform:scaleX(0.9583)">KrPermissionAclGenerationRules</div><svg class="r" style="left:43px;top:612px" width="16" height="16" viewBox="0 0 16 16" fill="none"><rect x="0.5" y="0.5" width="15" height="15" stroke="#a9a9a9" stroke-width="1"/><path d="M0.5 5.5h15M0.5 10.5h15" stroke="#a9a9a9" stroke-width="1"/><rect x="2" y="2" width="1.5" height="1.5" fill="#a9a9a9"/><rect x="2" y="7" width="1.5" height="1.5" fill="#a9a9a9"/><rect x="2" y="12" width="1.5" height="1.5" fill="#a9a9a9"/></svg><div class="t" style="left:65px;top:615.34px;font-size:12.00px;line-height:12.00px;color:#111;font-weight:400;transform-origin:0 0;transform:scaleX(0.9583)">KrPermissionFlags</div><svg class="r" style="left:43px;top:634px" width="16" height="16" viewBox="0 0 16 16" fill="none"><rect x="0.5" y="0.5" width="15" height="15" stroke="#a9a9a9" stroke-width="1"/><path d="M0.5 5.5h15M0.5 10.5h15" stroke="#a9a9a9" stroke-width="1"/><rect x="2" y="2" width="1.5" height="1.5" fill="#a9a9a9"/><rect x="2" y="7" width="1.5" height="1.5" fill="#a9a9a9"/><rect x="2" y="12" width="1.5" height="1.5" fill="#a9a9a9"/></svg><div class="t" style="left:65px;top:637.34px;font-size:12.00px;line-height:12.00px;color:#111;font-weight:400;transform-origin:0 0;transform:scaleX(0.9583)">KrPermissionRoles</div><svg class="r" style="left:43px;top:656px" width="16" height="16" viewBox="0 0 16 16" fill="none"><rect x="0.5" y="0.5" width="15" height="15" stroke="#a9a9a9" stroke-width="1"/><path d="M0.5 5.5h15M0.5 10.5h15" stroke="#a9a9a9" stroke-width="1"/><rect x="2" y="2" width="1.5" height="1.5" fill="#a9a9a9"/><rect x="2" y="7" width="1.5" height="1.5" fill="#a9a9a9"/><rect x="2" y="12" width="1.5" height="1.5" fill="#a9a9a9"/></svg><div class="t" style="left:65px;top:659.34px;font-size:12.00px;line-height:12.00px;color:#111;font-weight:400;transform-origin:0 0;transform:scaleX(0.9583)">KrPermissionRuleAccessSettings</div><svg class="r" style="left:43px;top:678px" width="16" height="16" viewBox="0 0 16 16" fill="none"><rect x="0.5" y="0.5" width="15" height="15" stroke="#a9a9a9" stroke-width="1"/><path d="M0.5 5.5h15M0.5 10.5h15" stroke="#a9a9a9" stroke-width="1"/><rect x="2" y="2" width="1.5" height="1.5" fill="#a9a9a9"/><rect x="2" y="7" width="1.5" height="1.5" fill="#a9a9a9"/><rect x="2" y="12" width="1.5" height="1.5" fill="#a9a9a9"/></svg><div class="t" style="left:65px;top:681.34px;font-size:12.00px;line-height:12.00px;color:#111;font-weight:400;transform-origin:0 0;transform:scaleX(0.9583)">KrPermissions</div><svg class="r" style="left:43px;top:700px" width="16" height="16" viewBox="0 0 16 16" fill="none"><rect x="0.5" y="0.5" width="15" height="15" stroke="#a9a9a9" stroke-width="1"/><path d="M0.5 5.5h15M0.5 10.5h15" stroke="#a9a9a9" stroke-width="1"/><rect x="2" y="2" width="1.5" height="1.5" fill="#a9a9a9"/><rect x="2" y="7" width="1.5" height="1.5" fill="#a9a9a9"/><rect x="2" y="12" width="1.5" height="1.5" fill="#a9a9a9"/></svg><div class="t" style="left:65px;top:703.34px;font-size:12.00px;line-height:12.00px;color:#111;font-weight:400;transform-origin:0 0;transform:scaleX(0.9583)">KrPermissionsControlTypes</div><svg class="r" style="left:43px;top:722px" width="16" height="16" viewBox="0 0 16 16" fill="none"><rect x="0.5" y="0.5" width="15" height="15" stroke="#a9a9a9" stroke-width="1"/><path d="M0.5 5.5h15M0.5 10.5h15" stroke="#a9a9a9" stroke-width="1"/><rect x="2" y="2" width="1.5" height="1.5" fill="#a9a9a9"/><rect x="2" y="7" width="1.5" height="1.5" fill="#a9a9a9"/><rect x="2" y="12" width="1.5" height="1.5" fill="#a9a9a9"/></svg><div class="t" style="left:65px;top:725.34px;font-size:12.00px;line-height:12.00px;color:#111;font-weight:400;transform-origin:0 0;transform:scaleX(0.9583)">KrPermissionsExtendedCards</div><svg class="r" style="left:43px;top:744px" width="16" height="16" viewBox="0 0 16 16" fill="none"><rect x="0.5" y="0.5" width="15" height="15" stroke="#a9a9a9" stroke-width="1"/><path d="M0.5 5.5h15M0.5 10.5h15" stroke="#a9a9a9" stroke-width="1"/><rect x="2" y="2" width="1.5" height="1.5" fill="#a9a9a9"/><rect x="2" y="7" width="1.5" height="1.5" fill="#a9a9a9"/><rect x="2" y="12" width="1.5" height="1.5" fill="#a9a9a9"/></svg><div class="t" style="left:65px;top:747.34px;font-size:12.00px;line-height:12.00px;color:#111;font-weight:400;transform-origin:0 0;transform:scaleX(0.9583)">KrPermissionsExtendedFiles</div><svg class="r" style="left:43px;top:766px" width="16" height="16" viewBox="0 0 16 16" fill="none"><rect x="0.5" y="0.5" width="15" height="15" stroke="#a9a9a9" stroke-width="1"/><path d="M0.5 5.5h15M0.5 10.5h15" stroke="#a9a9a9" stroke-width="1"/><rect x="2" y="2" width="1.5" height="1.5" fill="#a9a9a9"/><rect x="2" y="7" width="1.5" height="1.5" fill="#a9a9a9"/><rect x="2" y="12" width="1.5" height="1.5" fill="#a9a9a9"/></svg><div class="t" style="left:65px;top:769.34px;font-size:12.00px;line-height:12.00px;color:#111;font-weight:400;transform-origin:0 0;transform:scaleX(0.9583)">KrPermissionsExtendedMandatoryValidation</div><svg class="r" style="left:43px;top:788px" width="16" height="16" viewBox="0 0 16 16" fill="none"><rect x="0.5" y="0.5" width="15" height="15" stroke="#a9a9a9" stroke-width="1"/><path d="M0.5 5.5h15M0.5 10.5h15" stroke="#a9a9a9" stroke-width="1"/><rect x="2" y="2" width="1.5" height="1.5" fill="#a9a9a9"/><rect x="2" y="7" width="1.5" height="1.5" fill="#a9a9a9"/><rect x="2" y="12" width="1.5" height="1.5" fill="#a9a9a9"/></svg><div class="t" style="left:65px;top:791.34px;font-size:12.00px;line-height:12.00px;color:#111;font-weight:400;transform-origin:0 0;transform:scaleX(0.9583)">KrPermissionsExtendedTasks</div><svg class="r" style="left:43px;top:810px" width="16" height="16" viewBox="0 0 16 16" fill="none"><rect x="0.5" y="0.5" width="15" height="15" stroke="#a9a9a9" stroke-width="1"/><path d="M0.5 5.5h15M0.5 10.5h15" stroke="#a9a9a9" stroke-width="1"/><rect x="2" y="2" width="1.5" height="1.5" fill="#a9a9a9"/><rect x="2" y="7" width="1.5" height="1.5" fill="#a9a9a9"/><rect x="2" y="12" width="1.5" height="1.5" fill="#a9a9a9"/></svg><div class="t" style="left:65px;top:813.34px;font-size:12.00px;line-height:12.00px;color:#111;font-weight:400;transform-origin:0 0;transform:scaleX(0.9583)">KrPermissionsExtendedVisibility</div><svg class="r" style="left:43px;top:832px" width="16" height="16" viewBox="0 0 16 16" fill="none"><rect x="0.5" y="0.5" width="15" height="15" stroke="#a9a9a9" stroke-width="1"/><path d="M0.5 5.5h15M0.5 10.5h15" stroke="#a9a9a9" stroke-width="1"/><rect x="2" y="2" width="1.5" height="1.5" fill="#a9a9a9"/><rect x="2" y="7" width="1.5" height="1.5" fill="#a9a9a9"/><rect x="2" y="12" width="1.5" height="1.5" fill="#a9a9a9"/></svg><div class="t" style="left:65px;top:835.34px;font-size:12.00px;line-height:12.00px;color:#111;font-weight:400;transform-origin:0 0;transform:scaleX(0.9583)">KrPermissionsFileCheckRules</div><svg class="r" style="left:43px;top:854px" width="16" height="16" viewBox="0 0 16 16" fill="none"><rect x="0.5" y="0.5" width="15" height="15" stroke="#a9a9a9" stroke-width="1"/><path d="M0.5 5.5h15M0.5 10.5h15" stroke="#a9a9a9" stroke-width="1"/><rect x="2" y="2" width="1.5" height="1.5" fill="#a9a9a9"/><rect x="2" y="7" width="1.5" height="1.5" fill="#a9a9a9"/><rect x="2" y="12" width="1.5" height="1.5" fill="#a9a9a9"/></svg><div class="t" style="left:65px;top:857.34px;font-size:12.00px;line-height:12.00px;color:#111;font-weight:400;transform-origin:0 0;transform:scaleX(0.9583)">KrPermissionsFileEditAccessSettings</div><svg class="r" style="left:43px;top:876px" width="16" height="16" viewBox="0 0 16 16" fill="none"><rect x="0.5" y="0.5" width="15" height="15" stroke="#a9a9a9" stroke-width="1"/><path d="M0.5 5.5h15M0.5 10.5h15" stroke="#a9a9a9" stroke-width="1"/><rect x="2" y="2" width="1.5" height="1.5" fill="#a9a9a9"/><rect x="2" y="7" width="1.5" height="1.5" fill="#a9a9a9"/><rect x="2" y="12" width="1.5" height="1.5" fill="#a9a9a9"/></svg><div class="t" style="left:65px;top:879.34px;font-size:12.00px;line-height:12.00px;color:#111;font-weight:400;transform-origin:0 0;transform:scaleX(0.9583)">KrPermissionsFileReadAccessSettings</div><svg class="r" style="left:43px;top:898px" width="16" height="16" viewBox="0 0 16 16" fill="none"><rect x="0.5" y="0.5" width="15" height="15" stroke="#a9a9a9" stroke-width="1"/><path d="M0.5 5.5h15M0.5 10.5h15" stroke="#a9a9a9" stroke-width="1"/><rect x="2" y="2" width="1.5" height="1.5" fill="#a9a9a9"/><rect x="2" y="7" width="1.5" height="1.5" fill="#a9a9a9"/><rect x="2" y="12" width="1.5" height="1.5" fill="#a9a9a9"/></svg><div class="t" style="left:65px;top:901.34px;font-size:12.00px;line-height:12.00px;color:#111;font-weight:400;transform-origin:0 0;transform:scaleX(0.9583)">KrPermissionsMandatoryValidation</div></div><div class="r" style="left:354.00px;top:62.50px;width:1.00px;height:911.00px;background:#b4b4b4;"></div><div class="r" style="left:114.50px;top:972.80px;width:240.50px;height:1.00px;background:#b4b4b4;"></div><svg class="r" style="left:361px;top:68px" width="8" height="6" viewBox="0 0 8 6" fill="none"><path d="M1 5h6L4 1.5z" fill="#888"/></svg><div class="r" style="left:359.50px;top:211.50px;width:9.50px;height:163.50px;background:#c2c2c2;"></div><svg class="r" style="left:361px;top:962px" width="8" height="6" viewBox="0 0 8 6" fill="none"><path d="M1 1h6L4 4.5z" fill="#888"/></svg><svg class="r" style="left:121px;top:981px" width="6" height="9" viewBox="0 0 6 9" fill="none"><path d="M5 1v7L1.5 4.5z" fill="#888"/></svg><div class="r" style="left:133.00px;top:978.50px;width:164.00px;height:9.50px;background:#c2c2c2;"></div><svg class="r" style="left:342px;top:981px" width="6" height="9" viewBox="0 0 6 9" fill="none"><path d="M1 1v7l3.5-3.5z" fill="#888"/></svg><div class="r" style="left:112.00px;top:996.50px;width:1464.00px;height:1.50px;background:#d8d8d8;"></div><div class="r" style="left:384.50px;top:37.50px;width:1215.50px;height:63.50px;border:1px solid #e3e3e3;box-sizing:border-box;"></div><div class="t" style="left:393.00px;transform-origin:0 0;top:51.44px;font-size:12.00px;line-height:12.00px;color:#808080;font-weight:700;transform:scaleX(0.9583);">Алиас</div><div class="r" style="left:434.00px;top:45.50px;width:348.00px;height:21.50px;background:#fff;border:1px solid #e3e3e3;box-sizing:border-box;"></div><div class="t" style="left:439.00px;transform-origin:0 0;top:51.44px;font-size:12.00px;line-height:12.00px;color:#000;font-weight:400;transform:scaleX(0.9417);">KrDocTypes</div><div class="t" style="left:787.50px;transform-origin:0 0;top:51.44px;font-size:12.00px;line-height:12.00px;color:#808080;font-weight:700;transform:scaleX(0.9583);">Имя</div><div class="r" style="left:818.00px;top:45.50px;width:358.00px;height:21.50px;background:#fff;border:1px solid #e3e3e3;box-sizing:border-box;"></div><div class="t" style="left:823.00px;transform-origin:0 0;top:51.44px;font-size:12.00px;line-height:12.00px;color:#000;font-weight:400;transform:scaleX(0.9417);">$Views_Names_KrDocTypes</div><div class="t" style="left:1181.30px;transform-origin:0 0;top:51.44px;font-size:12.00px;line-height:12.00px;color:#808080;font-weight:700;transform:scaleX(0.9583);">Группа</div><div class="r" style="left:1226.00px;top:45.50px;width:343.00px;height:21.50px;background:#fff;border:1px solid #e3e3e3;box-sizing:border-box;"></div><div class="t" style="left:1231.00px;transform-origin:0 0;top:51.44px;font-size:12.00px;line-height:12.00px;color:#000;font-weight:400;transform:scaleX(0.9417);">Kr Wf</div><div class="r" style="left:390.00px;top:73.00px;width:104.00px;height:22.00px;background:#f0f0f0;"></div><div class="t" style="left:393.30px;transform-origin:0 0;top:78.74px;font-size:12.00px;line-height:12.00px;color:#000;font-weight:700;transform:scaleX(0.9667);">Редактор</div><div class="t" style="left:458.60px;transform-origin:0 0;top:78.74px;font-size:12.00px;line-height:12.00px;color:#111;font-weight:400;transform:scaleX(0.9833);">JSON</div><div class="t" style="left:497.30px;transform-origin:0 0;top:78.74px;font-size:12.00px;line-height:12.00px;color:#858585;font-weight:700;transform:scaleX(0.9667);">Описание</div><div class="r" style="left:560.50px;top:71.50px;width:1008.50px;height:21.50px;background:#fff;border:1px solid #e3e3e3;box-sizing:border-box;"></div><div class="r" style="left:384.5px;top:106px;width:122px;height:30px;border:1px solid #d5d5d5;border-bottom:none;border-radius:6px 6px 0 0;background:#fff;box-sizing:border-box"></div><div class="r" style="left:509px;top:106px;width:131.5px;height:25px;border:1px solid #d5d5d5;border-bottom:none;border-radius:6px 6px 0 0;background:#fff;box-sizing:border-box"></div><div class="r" style="left:643px;top:106px;width:155.5px;height:25px;border:1px solid #d5d5d5;border-bottom:none;border-radius:6px 6px 0 0;background:#fff;box-sizing:border-box"></div><div class="t" style="left:245.50px;width:400px;text-align:center;transform-origin:50% 0;top:114.10px;font-size:13.00px;line-height:13.00px;color:#000;font-weight:700;transform:scaleX(0.9231);">Метаданные</div><div class="t" style="left:375.00px;width:400px;text-align:center;transform-origin:50% 0;top:114.94px;font-size:12.00px;line-height:12.00px;color:#7d7d7d;font-weight:700;transform:scaleX(0.9583);">MSSQL запрос</div><div class="t" style="left:521.00px;width:400px;text-align:center;transform-origin:50% 0;top:114.94px;font-size:12.00px;line-height:12.00px;color:#7d7d7d;font-weight:700;transform:scaleX(0.9500);">PostgreSQL запрос</div><div class="r" style="left:384.5px;top:130.5px;width:1192.5px;height:863px;border:1px solid #d5d5d5;border-radius:6px;box-sizing:border-box;background:#fff"></div><div class="r" style="left:385.50px;top:130.50px;width:120.00px;height:3.50px;background:#fff;"></div><div class="r" style="left:389.00px;top:134.50px;width:1183.00px;height:854.00px;background:#f2f2f2;"></div><div class="r" style="left:393px;top:144.5px;width:1175px;height:16px;display:flex;align-items:center;"><div style="width:19.5px;height:1px;background:#a3a3a3;flex:none"></div><div style="margin:0 5.5px;font-size:12px;line-height:16px;color:#222;white-space:nowrap;flex:none">Перегрузки основных настроек представления</div><div style="flex:1;height:1px;background:#a3a3a3"></div></div><div class="r" style="left:393px;top:178.5px;width:1175px;height:16px;display:flex;align-items:center;"><div style="width:19.5px;height:1px;background:#a3a3a3;flex:none"></div><div style="margin:0 5.5px;font-size:12px;line-height:16px;color:#222;white-space:nowrap;flex:none">Основные настройки</div><div style="flex:1;height:1px;background:#a3a3a3"></div></div><div class="t" style="left:390.30px;top:201.44px;font-size:12.00px;line-height:12.00px;color:#5f5f5f;font-weight:400;transform-origin:0 0;transform:scaleX(0.9417);">Paging<span style="margin-left:8px;color:#2f7fd8;text-decoration:underline;">?</span></div><div class="r" style="left:390.30px;top:216.50px;width:236.70px;height:22.30px;background:#fff;border:1px solid #ababab;box-sizing:border-box;"></div><div class="t" style="left:394.70px;transform-origin:0 0;top:222.14px;font-size:12.00px;line-height:12.00px;color:#000;font-weight:400;transform:scaleX(0.9417);">No;</div><div class="r" style="left:630.50px;top:216.50px;width:23.00px;height:22.30px;background:#dddddd;border:1px solid #6f6f6f;box-sizing:border-box;"></div><svg class="r" style="left:636px;top:220px" width="12" height="16" viewBox="0 0 12 16" fill="none"><path d="M6 1.5v13M1 9.5l5 5 5-5" stroke="#333" stroke-width="1.1" fill="none"/></svg><div class="r" style="left:657.00px;top:216.50px;width:23.00px;height:22.30px;background:#dddddd;border:1px solid #6f6f6f;box-sizing:border-box;"></div><svg class="r" style="left:662px;top:228px" width="12" height="4" viewBox="0 0 12 4" fill="none"><rect x="1.5" y="1.5" width="1.6" height="1.6" fill="#222"/><rect x="5.2" y="1.5" width="1.6" height="1.6" fill="#222"/><rect x="8.9" y="1.5" width="1.6" height="1.6" fill="#222"/></svg><div class="t" style="left:685.20px;top:201.44px;font-size:12.00px;line-height:12.00px;color:#5f5f5f;font-weight:400;transform-origin:0 0;transform:scaleX(0.9417);">QuickSearchParam<span style="margin-left:8px;color:#2f7fd8;text-decoration:underline;">?</span></div><div class="r" style="left:685.20px;top:216.50px;width:237.30px;height:22.30px;background:#fff;border:1px solid #ababab;box-sizing:border-box;"></div><div class="t" style="left:689.60px;transform-origin:0 0;top:222.14px;font-size:12.00px;line-height:12.00px;color:#000;font-weight:400;transform:scaleX(0.9417);">Name;</div><div class="r" style="left:926.00px;top:216.50px;width:23.00px;height:22.30px;background:#dddddd;border:1px solid #6f6f6f;box-sizing:border-box;"></div><svg class="r" style="left:932px;top:220px" width="12" height="16" viewBox="0 0 12 16" fill="none"><path d="M6 1.5v13M1 9.5l5 5 5-5" stroke="#333" stroke-width="1.1" fill="none"/></svg><div class="r" style="left:952.50px;top:216.50px;width:23.00px;height:22.30px;background:#dddddd;border:1px solid #6f6f6f;box-sizing:border-box;"></div><svg class="r" style="left:958px;top:228px" width="12" height="4" viewBox="0 0 12 4" fill="none"><rect x="1.5" y="1.5" width="1.6" height="1.6" fill="#222"/><rect x="5.2" y="1.5" width="1.6" height="1.6" fill="#222"/><rect x="8.9" y="1.5" width="1.6" height="1.6" fill="#222"/></svg><div class="t" style="left:981.00px;top:201.44px;font-size:12.00px;line-height:12.00px;color:#5f5f5f;font-weight:400;transform-origin:0 0;transform:scaleX(0.9417);">DefaultSortColumns<span style="margin-left:8px;color:#2f7fd8;text-decoration:underline;">?</span></div><div class="r" style="left:981.00px;top:216.50px;width:564.00px;height:22.30px;background:#fff;border:1px solid #ababab;box-sizing:border-box;"></div><div class="t" style="left:985.40px;transform-origin:0 0;top:222.14px;font-size:12.00px;line-height:12.00px;color:#000;font-weight:400;transform:scaleX(0.9417);">KrDocTypeTitle ASC;</div><div class="r" style="left:1548.00px;top:216.50px;width:23.00px;height:22.30px;background:#dddddd;border:1px solid #6f6f6f;box-sizing:border-box;"></div><svg class="r" style="left:1554px;top:228px" width="12" height="4" viewBox="0 0 12 4" fill="none"><rect x="1.5" y="1.5" width="1.6" height="1.6" fill="#222"/><rect x="5.2" y="1.5" width="1.6" height="1.6" fill="#222"/><rect x="8.9" y="1.5" width="1.6" height="1.6" fill="#222"/></svg><div class="t" style="left:390.30px;top:247.44px;font-size:12.00px;line-height:12.00px;color:#5f5f5f;font-weight:400;transform-origin:0 0;transform:scaleX(0.9417);">RowCountSubset<span style="margin-left:8px;color:#2f7fd8;text-decoration:underline;">?</span></div><div class="r" style="left:390.30px;top:262.50px;width:236.70px;height:22.30px;background:#fff;border:1px solid #ababab;box-sizing:border-box;"></div><div class="r" style="left:630.50px;top:262.50px;width:23.00px;height:22.30px;background:#dddddd;border:1px solid #6f6f6f;box-sizing:border-box;"></div><svg class="r" style="left:636px;top:266px" width="12" height="16" viewBox="0 0 12 16" fill="none"><path d="M6 1.5v13M1 9.5l5 5 5-5" stroke="#333" stroke-width="1.1" fill="none"/></svg><div class="r" style="left:657.00px;top:262.50px;width:23.00px;height:22.30px;background:#dddddd;border:1px solid #6f6f6f;box-sizing:border-box;"></div><svg class="r" style="left:662px;top:274px" width="12" height="4" viewBox="0 0 12 4" fill="none"><rect x="1.5" y="1.5" width="1.6" height="1.6" fill="#222"/><rect x="5.2" y="1.5" width="1.6" height="1.6" fill="#222"/><rect x="8.9" y="1.5" width="1.6" height="1.6" fill="#222"/></svg><div class="t" style="left:685.20px;top:247.44px;font-size:12.00px;line-height:12.00px;color:#5f5f5f;font-weight:400;transform-origin:0 0;transform:scaleX(0.9417);">GroupingColumn<span style="margin-left:8px;color:#2f7fd8;text-decoration:underline;">?</span></div><div class="r" style="left:685.20px;top:262.50px;width:237.30px;height:22.30px;background:#fff;border:1px solid #ababab;box-sizing:border-box;"></div><div class="r" style="left:926.00px;top:262.50px;width:23.00px;height:22.30px;background:#dddddd;border:1px solid #6f6f6f;box-sizing:border-box;"></div><svg class="r" style="left:932px;top:266px" width="12" height="16" viewBox="0 0 12 16" fill="none"><path d="M6 1.5v13M1 9.5l5 5 5-5" stroke="#333" stroke-width="1.1" fill="none"/></svg><div class="r" style="left:952.50px;top:262.50px;width:23.00px;height:22.30px;background:#dddddd;border:1px solid #6f6f6f;box-sizing:border-box;"></div><svg class="r" style="left:958px;top:274px" width="12" height="4" viewBox="0 0 12 4" fill="none"><rect x="1.5" y="1.5" width="1.6" height="1.6" fill="#222"/><rect x="5.2" y="1.5" width="1.6" height="1.6" fill="#222"/><rect x="8.9" y="1.5" width="1.6" height="1.6" fill="#222"/></svg><div class="t" style="left:981.00px;top:247.44px;font-size:12.00px;line-height:12.00px;color:#5f5f5f;font-weight:400;transform-origin:0 0;transform:scaleX(0.9417);">SelectionMode<span style="margin-left:8px;color:#2f7fd8;text-decoration:underline;">?</span></div><div class="r" style="left:981.00px;top:262.50px;width:237.00px;height:22.30px;background:#fff;border:1px solid #ababab;box-sizing:border-box;"></div><div class="t" style="left:985.40px;transform-origin:0 0;top:268.14px;font-size:12.00px;line-height:12.00px;color:#000;font-weight:400;transform:scaleX(0.9417);">Row;</div><div class="r" style="left:1221.50px;top:262.50px;width:23.00px;height:22.30px;background:#dddddd;border:1px solid #6f6f6f;box-sizing:border-box;"></div><svg class="r" style="left:1227px;top:266px" width="12" height="16" viewBox="0 0 12 16" fill="none"><path d="M6 1.5v13M1 9.5l5 5 5-5" stroke="#333" stroke-width="1.1" fill="none"/></svg><div class="r" style="left:1248.00px;top:262.50px;width:23.00px;height:22.30px;background:#dddddd;border:1px solid #6f6f6f;box-sizing:border-box;"></div><svg class="r" style="left:1254px;top:274px" width="12" height="4" viewBox="0 0 12 4" fill="none"><rect x="1.5" y="1.5" width="1.6" height="1.6" fill="#222"/><rect x="5.2" y="1.5" width="1.6" height="1.6" fill="#222"/><rect x="8.9" y="1.5" width="1.6" height="1.6" fill="#222"/></svg><div class="t" style="left:1276.00px;top:247.44px;font-size:12.00px;line-height:12.00px;color:#5f5f5f;font-weight:400;transform-origin:0 0;transform:scaleX(0.9417);">ConnectionAlias<span style="margin-left:8px;color:#2f7fd8;text-decoration:underline;">?</span></div><div class="r" style="left:1276.00px;top:262.50px;width:295.00px;height:22.30px;background:#fff;border:1px solid #ababab;box-sizing:border-box;"></div><div class="t" style="left:390.30px;top:293.44px;font-size:12.00px;line-height:12.00px;color:#5f5f5f;font-weight:400;transform-origin:0 0;transform:scaleX(0.9417);">PageLimit<span style="margin-left:8px;color:#2f7fd8;text-decoration:underline;">?</span></div><div class="r" style="left:390.30px;top:308.50px;width:289.70px;height:22.30px;background:#fff;border:1px solid #ababab;box-sizing:border-box;"></div><div class="t" style="left:685.20px;top:293.44px;font-size:12.00px;line-height:12.00px;color:#5f5f5f;font-weight:400;transform-origin:0 0;transform:scaleX(0.9417);">ExportDataPageLimit<span style="margin-left:8px;color:#2f7fd8;text-decoration:underline;">?</span></div><div class="r" style="left:685.20px;top:308.50px;width:290.30px;height:22.30px;background:#fff;border:1px solid #ababab;box-sizing:border-box;"></div><div class="t" style="left:981.00px;top:293.44px;font-size:12.00px;line-height:12.00px;color:#5f5f5f;font-weight:400;transform-origin:0 0;transform:scaleX(0.9417);">AutoWidthRowLimit<span style="margin-left:8px;color:#2f7fd8;text-decoration:underline;">?</span></div><div class="r" style="left:981.00px;top:308.50px;width:290.00px;height:22.30px;background:#fff;border:1px solid #ababab;box-sizing:border-box;"></div><div class="t" style="left:1276.00px;top:293.44px;font-size:12.00px;line-height:12.00px;color:#5f5f5f;font-weight:400;transform-origin:0 0;transform:scaleX(0.9417);">Appearance<span style="margin-left:8px;color:#2f7fd8;text-decoration:underline;">?</span></div><div class="r" style="left:1276.00px;top:308.50px;width:295.00px;height:22.30px;background:#fff;border:1px solid #ababab;box-sizing:border-box;"></div><div class="r" style="left:391.00px;top:341.30px;width:14.00px;height:13.00px;background:#fff;border:1px solid #4d4d4d;box-sizing:border-box;"></div><svg class="r" style="left:392px;top:342px" width="12" height="11" viewBox="0 0 12 11" fill="none"><path d="M2 5.6l2.8 3.2 5-7.3" stroke="#1a1a1a" stroke-width="1.9" fill="none"/></svg><div class="t" style="left:410.50px;transform-origin:0 0;top:342.44px;font-size:12.00px;line-height:12.00px;color:#111;font-weight:400;transform:scaleX(0.9417);">MultiSelect</div><div class="r" style="left:391.00px;top:369.30px;width:14.00px;height:13.00px;background:#fff;border:1px solid #4d4d4d;box-sizing:border-box;"></div><svg class="r" style="left:392px;top:370px" width="12" height="11" viewBox="0 0 12 11" fill="none"><path d="M2 5.6l2.8 3.2 5-7.3" stroke="#1a1a1a" stroke-width="1.9" fill="none"/></svg><div class="t" style="left:410.50px;transform-origin:0 0;top:370.44px;font-size:12.00px;line-height:12.00px;color:#111;font-weight:400;transform:scaleX(0.9417);">AutoSelectFirstRow</div><div class="r" style="left:686.00px;top:341.30px;width:14.00px;height:13.00px;background:#fff;border:1px solid #4d4d4d;box-sizing:border-box;"></div><div class="t" style="left:705.50px;transform-origin:0 0;top:342.44px;font-size:12.00px;line-height:12.00px;color:#111;font-weight:400;transform:scaleX(0.9417);">EnableAutoWidth</div><div class="r" style="left:686.00px;top:369.30px;width:14.00px;height:13.00px;background:#fff;border:1px solid #4d4d4d;box-sizing:border-box;"></div><div class="t" style="left:705.50px;transform-origin:0 0;top:370.44px;font-size:12.00px;line-height:12.00px;color:#111;font-weight:400;transform:scaleX(0.9417);">CollapseGroups</div><div class="r" style="left:981.70px;top:341.30px;width:14.00px;height:13.00px;background:#fff;border:1px solid #4d4d4d;box-sizing:border-box;"></div><svg class="r" style="left:983px;top:342px" width="12" height="11" viewBox="0 0 12 11" fill="none"><path d="M2 5.6l2.8 3.2 5-7.3" stroke="#1a1a1a" stroke-width="1.9" fill="none"/></svg><div class="t" style="left:1001.20px;transform-origin:0 0;top:342.44px;font-size:12.00px;line-height:12.00px;color:#111;font-weight:400;transform:scaleX(0.9417);">TreatAsSingleQuery</div><div class="r" style="left:1277.00px;top:341.30px;width:14.00px;height:13.00px;background:#fff;border:1px solid #4d4d4d;box-sizing:border-box;"></div><div class="t" style="left:1296.50px;transform-origin:0 0;top:342.44px;font-size:12.00px;line-height:12.00px;color:#111;font-weight:400;transform:scaleX(0.9417);">RowCounterVisible</div><div class="r" style="left:393px;top:402px;width:1175px;height:16px;display:flex;align-items:center;"><div style="width:19.5px;height:1px;background:#a3a3a3;flex:none"></div><div style="margin:0 5.5px;font-size:12px;line-height:16px;color:#222;white-space:nowrap;flex:none">Настройки группировки древовидного представления</div><div style="flex:1;height:1px;background:#a3a3a3"></div></div><div class="r" style="left:393px;top:435.5px;width:1175px;height:16px;display:flex;align-items:center;"><div style="width:19.5px;height:1px;background:#a3a3a3;flex:none"></div><div style="margin:0 5.5px;font-size:12px;line-height:16px;color:#222;white-space:nowrap;flex:none">Настройки отображения тегов</div><div style="flex:1;height:1px;background:#a3a3a3"></div></div><div class="r" style="left:393px;top:470px;width:1175px;height:16px;display:flex;align-items:center;"><div style="width:19.5px;height:1px;background:#a3a3a3;flex:none"></div><div style="margin:0 5.5px;font-size:12px;line-height:16px;color:#222;white-space:nowrap;flex:none">Настройки колонок, параметров, сабсетов, ссылок, внешности и расширений</div><div style="flex:1;height:1px;background:#a3a3a3"></div></div><div class="t" style="left:392.00px;transform-origin:0 0;top:492.44px;font-size:12.00px;line-height:12.00px;color:#5f5f5f;font-weight:400;transform:scaleX(0.9833);">Columns (колонки)</div><div class="r" style="left:395.5px;top:514px;width:545.0px;height:95.0px;overflow:hidden;"><div class="r" style="left:0;top:0;width:545.0px;height:95.0px;border:1px solid #d3d3d3;border-radius:6px;box-sizing:border-box;background:#fafafa;overflow:hidden"><div class="r" style="left:0;top:0;width:100%;height:22.5px;background:#e6e6e6;border-bottom:1px solid #d9d9d9;box-sizing:border-box"></div><div class="r" style="left:0;top:22.5px;width:100%;height:24px;background:#fafafa;border-bottom:1px solid #e4e4e4;box-sizing:border-box"></div><div class="r" style="left:0;top:46.5px;width:100%;height:24px;background:#dcdcdc;border-bottom:1px solid #e4e4e4;box-sizing:border-box"></div><div class="r" style="left:0;top:70.5px;width:100%;height:24px;background:#fafafa;border-bottom:1px solid #e4e4e4;box-sizing:border-box"></div></div><div class="r" style="left:164.60000000000002px;top:4px;width:1px;height:14.5px;background:#b8b8b8"></div><div class="r" style="left:257.20000000000005px;top:4px;width:1px;height:14.5px;background:#b8b8b8"></div><div class="r" style="left:313.29999999999995px;top:4px;width:1px;height:14.5px;background:#b8b8b8"></div><div class="t" style="left:-117.50px;width:400px;text-align:center;transform-origin:50% 0;top:6.49px;font-size:12.00px;line-height:12.00px;color:#111;font-weight:400;transform:scaleX(0.9583);">Алиас</div><div class="t" style="left:11.50px;width:400px;text-align:center;transform-origin:50% 0;top:6.49px;font-size:12.00px;line-height:12.00px;color:#111;font-weight:400;transform:scaleX(0.9583);">Название</div><div class="t" style="left:85.50px;width:400px;text-align:center;transform-origin:50% 0;top:6.49px;font-size:12.00px;line-height:12.00px;color:#111;font-weight:400;transform:scaleX(0.9583);">Условие</div><div class="t" style="left:7.00px;transform-origin:0 0;top:29.30px;font-size:13.00px;line-height:13.00px;color:#111;font-weight:400;transform:scaleX(0.9538);">KrDocTypeID</div><div class="t" style="left:7.00px;transform-origin:0 0;top:53.30px;font-size:13.00px;line-height:13.00px;color:#111;font-weight:400;transform:scaleX(0.9538);">KrDocTypeTitle</div><div class="t" style="left:171.70px;transform-origin:0 0;top:53.30px;font-size:13.00px;line-height:13.00px;color:#111;font-weight:400;transform:scaleX(0.9538);">Название</div><div class="t" style="left:7.00px;transform-origin:0 0;top:77.30px;font-size:13.00px;line-height:13.00px;color:#111;font-weight:400;transform:scaleX(0.9538);">KrDocCardTypeCaption</div><div class="t" style="left:171.70px;transform-origin:0 0;top:77.30px;font-size:13.00px;line-height:13.00px;color:#111;font-weight:400;transform:scaleX(0.9538);">Тип карточки</div></div><div class="r" style="left:395.20px;top:613.20px;width:25.70px;height:25.50px;background:#dddddd;border:1px solid #6f6f6f;box-sizing:border-box;"></div><svg class="r" style="left:398px;top:616px" width="20" height="20" viewBox="0 0 20 20" fill="none"><path d="M5.5 18.5V6L10.5 1.5 15.5 6v12.5z" stroke="#222" stroke-width="1" fill="none" stroke-linejoin="miter"/><path d="M10.5 9.5v6M7.5 12.5h6" stroke="#222" stroke-width="1"/></svg><div class="r" style="left:427.10px;top:613.20px;width:25.70px;height:25.50px;background:#dddddd;border:1px solid #6f6f6f;box-sizing:border-box;"></div><svg class="r" style="left:430px;top:616px" width="20" height="20" viewBox="0 0 20 20" fill="none"><path d="M5.5 1.5h10v12l-5 5-5-5z" stroke="#222" stroke-width="1" fill="none" stroke-linejoin="miter"/><path d="M8 7.5h5" stroke="#222" stroke-width="1"/></svg><div class="r" style="left:459.10px;top:613.20px;width:25.70px;height:25.50px;background:#dddddd;border:1px solid #6f6f6f;box-sizing:border-box;"></div><svg class="r" style="left:462px;top:616px" width="20" height="20" viewBox="0 0 20 20" fill="none"><path d="M4.5 5.5v11.5h9" stroke="#222" stroke-width="1" fill="none"/><path d="M6.5 2.5h7l2.5 2.5v11.5h-9.5z" stroke="#222" stroke-width="1" fill="none"/><path d="M8.5 6.5h2M8.5 8.5h6M8.5 10.5h6M8.5 12.5h6M8.5 14.5h6" stroke="#222" stroke-width="0.9"/></svg><div class="r" style="left:491.10px;top:613.20px;width:25.70px;height:25.50px;background:#f2f2f2;border:1px solid #c3c3c3;box-sizing:border-box;"></div><svg class="r" style="left:494px;top:616px" width="20" height="20" viewBox="0 0 20 20" fill="none"><path d="M3.5 15.5v-12h4l1.5 1.5h7.5v10.5z" stroke="#b0b0b0" stroke-width="1" fill="none"/><path d="M3.5 6.5h13" stroke="#b0b0b0" stroke-width="1"/><path d="M10.5 17.5v-7M8 13l2.5-2.5 2.5 2.5" stroke="#b0b0b0" stroke-width="1" fill="none"/></svg><div class="r" style="left:756.30px;top:616.10px;width:89.10px;height:25.50px;background:#dddddd;border:1px solid #6f6f6f;box-sizing:border-box;"></div><div class="t" style="left:600.80px;width:400px;text-align:center;transform-origin:50% 0;top:624.74px;font-size:12.00px;line-height:12.00px;color:#111;font-weight:400;transform:scaleX(0.9833);">Добавить</div><div class="r" style="left:851.00px;top:616.10px;width:89.50px;height:25.50px;background:#dddddd;border:1px solid #6f6f6f;box-sizing:border-box;"></div><div class="t" style="left:695.70px;width:400px;text-align:center;transform-origin:50% 0;top:624.74px;font-size:12.00px;line-height:12.00px;color:#111;font-weight:400;transform:scaleX(0.9833);">Удалить</div><div class="t" style="left:392.00px;transform-origin:0 0;top:665.44px;font-size:12.00px;line-height:12.00px;color:#5f5f5f;font-weight:400;transform:scaleX(0.9833);">Parameters (параметры)</div><div class="r" style="left:395.5px;top:686.5px;width:545.0px;height:71.5px;overflow:hidden;"><div class="r" style="left:0;top:0;width:545.0px;height:71.5px;border:1px solid #d3d3d3;border-radius:6px;box-sizing:border-box;background:#fafafa;overflow:hidden"><div class="r" style="left:0;top:0;width:100%;height:23.0px;background:#e6e6e6;border-bottom:1px solid #d9d9d9;box-sizing:border-box"></div><div class="r" style="left:0;top:23.0px;width:100%;height:24px;background:#fafafa;border-bottom:1px solid #e4e4e4;box-sizing:border-box"></div><div class="r" style="left:0;top:47.0px;width:100%;height:24px;background:#fafafa;border-bottom:1px solid #e4e4e4;box-sizing:border-box"></div></div><div class="r" style="left:97.0px;top:4px;width:1px;height:15.0px;background:#b8b8b8"></div><div class="r" style="left:190.70000000000005px;top:4px;width:1px;height:15.0px;background:#b8b8b8"></div><div class="r" style="left:246.79999999999995px;top:4px;width:1px;height:15.0px;background:#b8b8b8"></div><div class="t" style="left:-151.50px;width:400px;text-align:center;transform-origin:50% 0;top:6.74px;font-size:12.00px;line-height:12.00px;color:#111;font-weight:400;transform:scaleX(0.9583);">Алиас</div><div class="t" style="left:-55.50px;width:400px;text-align:center;transform-origin:50% 0;top:6.74px;font-size:12.00px;line-height:12.00px;color:#111;font-weight:400;transform:scaleX(0.9583);">Название</div><div class="t" style="left:19.00px;width:400px;text-align:center;transform-origin:50% 0;top:6.74px;font-size:12.00px;line-height:12.00px;color:#111;font-weight:400;transform:scaleX(0.9583);">Условие</div><div class="t" style="left:7.00px;transform-origin:0 0;top:29.80px;font-size:13.00px;line-height:13.00px;color:#111;font-weight:400;transform:scaleX(0.9538);">Name</div><div class="t" style="left:105.00px;transform-origin:0 0;top:29.80px;font-size:13.00px;line-height:13.00px;color:#111;font-weight:400;transform:scaleX(0.9538);">Название</div><div class="t" style="left:7.00px;transform-origin:0 0;top:53.80px;font-size:13.00px;line-height:13.00px;color:#111;font-weight:400;transform:scaleX(0.9538);">CardTypeID</div><div class="t" style="left:105.00px;transform-origin:0 0;top:53.80px;font-size:13.00px;line-height:13.00px;color:#111;font-weight:400;transform:scaleX(0.9538);">Тип карточки</div></div><div class="r" style="left:395.20px;top:762.30px;width:25.70px;height:25.50px;background:#f2f2f2;border:1px solid #c3c3c3;box-sizing:border-box;"></div><svg class="r" style="left:398px;top:765px" width="20" height="20" viewBox="0 0 20 20" fill="none"><path d="M5.5 18.5V6L10.5 1.5 15.5 6v12.5z" stroke="#b0b0b0" stroke-width="1" fill="none" stroke-linejoin="miter"/><path d="M10.5 9.5v6M7.5 12.5h6" stroke="#b0b0b0" stroke-width="1"/></svg><div class="r" style="left:427.10px;top:762.30px;width:25.70px;height:25.50px;background:#f2f2f2;border:1px solid #c3c3c3;box-sizing:border-box;"></div><svg class="r" style="left:430px;top:765px" width="20" height="20" viewBox="0 0 20 20" fill="none"><path d="M5.5 1.5h10v12l-5 5-5-5z" stroke="#b0b0b0" stroke-width="1" fill="none" stroke-linejoin="miter"/><path d="M8 7.5h5" stroke="#b0b0b0" stroke-width="1"/></svg><div class="r" style="left:459.10px;top:762.30px;width:25.70px;height:25.50px;background:#f2f2f2;border:1px solid #c3c3c3;box-sizing:border-box;"></div><svg class="r" style="left:462px;top:765px" width="20" height="20" viewBox="0 0 20 20" fill="none"><path d="M4.5 5.5v11.5h9" stroke="#b0b0b0" stroke-width="1" fill="none"/><path d="M6.5 2.5h7l2.5 2.5v11.5h-9.5z" stroke="#b0b0b0" stroke-width="1" fill="none"/><path d="M8.5 6.5h2M8.5 8.5h6M8.5 10.5h6M8.5 12.5h6M8.5 14.5h6" stroke="#b0b0b0" stroke-width="0.9"/></svg><div class="r" style="left:491.10px;top:762.30px;width:25.70px;height:25.50px;background:#f2f2f2;border:1px solid #c3c3c3;box-sizing:border-box;"></div><svg class="r" style="left:494px;top:765px" width="20" height="20" viewBox="0 0 20 20" fill="none"><path d="M3.5 15.5v-12h4l1.5 1.5h7.5v10.5z" stroke="#b0b0b0" stroke-width="1" fill="none"/><path d="M3.5 6.5h13" stroke="#b0b0b0" stroke-width="1"/><path d="M10.5 17.5v-7M8 13l2.5-2.5 2.5 2.5" stroke="#b0b0b0" stroke-width="1" fill="none"/></svg><div class="r" style="left:756.30px;top:765.60px;width:89.10px;height:25.50px;background:#dddddd;border:1px solid #6f6f6f;box-sizing:border-box;"></div><div class="t" style="left:600.80px;width:400px;text-align:center;transform-origin:50% 0;top:774.24px;font-size:12.00px;line-height:12.00px;color:#111;font-weight:400;transform:scaleX(0.9833);">Добавить</div><div class="r" style="left:851.00px;top:765.60px;width:89.50px;height:25.50px;background:#f0f0f0;border:1px solid #adadad;box-sizing:border-box;"></div><div class="t" style="left:695.70px;width:400px;text-align:center;transform-origin:50% 0;top:774.24px;font-size:12.00px;line-height:12.00px;color:#111;font-weight:400;transform:scaleX(0.9833);">Удалить</div><div class="t" style="left:392.00px;transform-origin:0 0;top:814.44px;font-size:12.00px;line-height:12.00px;color:#5f5f5f;font-weight:400;transform:scaleX(0.9833);">References (ссылки)</div><div class="r" style="left:395.5px;top:836px;width:545.0px;height:47.0px;overflow:hidden;"><div class="r" style="left:0;top:0;width:545.0px;height:47.0px;border:1px solid #d3d3d3;border-radius:6px;box-sizing:border-box;background:#fafafa;overflow:hidden"><div class="r" style="left:0;top:0;width:100%;height:22.5px;background:#e6e6e6;border-bottom:1px solid #d9d9d9;box-sizing:border-box"></div><div class="r" style="left:0;top:22.5px;width:100%;height:24px;background:#fafafa;border-bottom:1px solid #e4e4e4;box-sizing:border-box"></div></div><div class="r" style="left:93.30000000000001px;top:4px;width:1px;height:14.5px;background:#b8b8b8"></div><div class="r" style="left:149.5px;top:4px;width:1px;height:14.5px;background:#b8b8b8"></div><div class="t" style="left:-153.00px;width:400px;text-align:center;transform-origin:50% 0;top:6.49px;font-size:12.00px;line-height:12.00px;color:#111;font-weight:400;transform:scaleX(0.9583);">Алиас</div><div class="t" style="left:-78.00px;width:400px;text-align:center;transform-origin:50% 0;top:6.49px;font-size:12.00px;line-height:12.00px;color:#111;font-weight:400;transform:scaleX(0.9583);">Условие</div><div class="t" style="left:7.00px;transform-origin:0 0;top:29.30px;font-size:13.00px;line-height:13.00px;color:#111;font-weight:400;transform:scaleX(0.9538);">KrDocType</div></div><div class="r" style="left:395.20px;top:887.30px;width:25.70px;height:25.50px;background:#f2f2f2;border:1px solid #c3c3c3;box-sizing:border-box;"></div><svg class="r" style="left:398px;top:890px" width="20" height="20" viewBox="0 0 20 20" fill="none"><path d="M5.5 18.5V6L10.5 1.5 15.5 6v12.5z" stroke="#b0b0b0" stroke-width="1" fill="none" stroke-linejoin="miter"/><path d="M10.5 9.5v6M7.5 12.5h6" stroke="#b0b0b0" stroke-width="1"/></svg><div class="r" style="left:427.10px;top:887.30px;width:25.70px;height:25.50px;background:#f2f2f2;border:1px solid #c3c3c3;box-sizing:border-box;"></div><svg class="r" style="left:430px;top:890px" width="20" height="20" viewBox="0 0 20 20" fill="none"><path d="M5.5 1.5h10v12l-5 5-5-5z" stroke="#b0b0b0" stroke-width="1" fill="none" stroke-linejoin="miter"/><path d="M8 7.5h5" stroke="#b0b0b0" stroke-width="1"/></svg><div class="r" style="left:459.10px;top:887.30px;width:25.70px;height:25.50px;background:#f2f2f2;border:1px solid #c3c3c3;box-sizing:border-box;"></div><svg class="r" style="left:462px;top:890px" width="20" height="20" viewBox="0 0 20 20" fill="none"><path d="M4.5 5.5v11.5h9" stroke="#b0b0b0" stroke-width="1" fill="none"/><path d="M6.5 2.5h7l2.5 2.5v11.5h-9.5z" stroke="#b0b0b0" stroke-width="1" fill="none"/><path d="M8.5 6.5h2M8.5 8.5h6M8.5 10.5h6M8.5 12.5h6M8.5 14.5h6" stroke="#b0b0b0" stroke-width="0.9"/></svg><div class="r" style="left:491.10px;top:887.30px;width:25.70px;height:25.50px;background:#f2f2f2;border:1px solid #c3c3c3;box-sizing:border-box;"></div><svg class="r" style="left:494px;top:890px" width="20" height="20" viewBox="0 0 20 20" fill="none"><path d="M3.5 15.5v-12h4l1.5 1.5h7.5v10.5z" stroke="#b0b0b0" stroke-width="1" fill="none"/><path d="M3.5 6.5h13" stroke="#b0b0b0" stroke-width="1"/><path d="M10.5 17.5v-7M8 13l2.5-2.5 2.5 2.5" stroke="#b0b0b0" stroke-width="1" fill="none"/></svg><div class="r" style="left:756.30px;top:890.30px;width:89.10px;height:25.50px;background:#dddddd;border:1px solid #6f6f6f;box-sizing:border-box;"></div><div class="t" style="left:600.80px;width:400px;text-align:center;transform-origin:50% 0;top:898.94px;font-size:12.00px;line-height:12.00px;color:#111;font-weight:400;transform:scaleX(0.9833);">Добавить</div><div class="r" style="left:851.00px;top:890.30px;width:89.50px;height:25.50px;background:#f0f0f0;border:1px solid #adadad;box-sizing:border-box;"></div><div class="t" style="left:695.70px;width:400px;text-align:center;transform-origin:50% 0;top:898.94px;font-size:12.00px;line-height:12.00px;color:#111;font-weight:400;transform:scaleX(0.9833);">Удалить</div><div class="t" style="left:392.00px;transform-origin:0 0;top:939.04px;font-size:12.00px;line-height:12.00px;color:#5f5f5f;font-weight:400;transform:scaleX(0.9833);">Subsets (группировки)</div><div class="r" style="left:395.5px;top:960.3px;width:545.0px;height:28.200000000000045px;overflow:hidden;"><div class="r" style="left:0;top:0;width:545.0px;height:47.5px;border:1px solid #d3d3d3;border-radius:6px;box-sizing:border-box;background:#fafafa;overflow:hidden"><div class="r" style="left:0;top:0;width:100%;height:23.0px;background:#e6e6e6;border-bottom:1px solid #d9d9d9;box-sizing:border-box"></div><div class="r" style="left:0;top:23.0px;width:100%;height:24px;background:#fafafa;border-bottom:1px solid #e4e4e4;box-sizing:border-box"></div></div><div class="r" style="left:43.19999999999999px;top:4px;width:1px;height:15.0px;background:#b8b8b8"></div><div class="r" style="left:105.69999999999999px;top:4px;width:1px;height:15.0px;background:#b8b8b8"></div><div class="r" style="left:161.0px;top:4px;width:1px;height:15.0px;background:#b8b8b8"></div><div class="t" style="left:5.50px;transform-origin:0 0;top:6.74px;font-size:12.00px;line-height:12.00px;color:#111;font-weight:400;transform:scaleX(0.9583);">Алиас</div><div class="t" style="left:50.50px;transform-origin:0 0;top:6.74px;font-size:12.00px;line-height:12.00px;color:#111;font-weight:400;transform:scaleX(0.9583);">Название</div><div class="t" style="left:111.50px;transform-origin:0 0;top:6.74px;font-size:12.00px;line-height:12.00px;color:#111;font-weight:400;transform:scaleX(0.9583);">Условие</div></div><div class="r" style="left:950.00px;top:485.00px;width:1.00px;height:503.50px;background:#c8c8c8;"></div><svg class="r" style="left:955px;top:489px" width="8" height="6" viewBox="0 0 8 6" fill="none"><path d="M1 5h6L4 1.5z" fill="#777"/></svg><div class="r" style="left:956.00px;top:502.00px;width:9.00px;height:287.00px;background:#bdbdbd;"></div><svg class="r" style="left:955px;top:977px" width="8" height="6" viewBox="0 0 8 6" fill="none"><path d="M1 1h6L4 4.5z" fill="#777"/></svg><div class="t" style="left:982.40px;transform-origin:0 0;top:504.14px;font-size:15.90px;line-height:15.90px;color:#111;font-weight:400;transform:scaleX(1.0000);">Свойства колонки &quot;KrDocTypeTitle&quot;</div><div class="t" style="left:983.00px;top:535.94px;font-size:12.00px;line-height:12.00px;color:#5f5f5f;font-weight:400;transform-origin:0 0;transform:scaleX(0.9417);">Alias<span style="margin-left:7px">*</span><span style="margin-left:8px;color:#2f7fd8;text-decoration:underline;">?</span></div><div class="r" style="left:983.00px;top:551.40px;width:288.00px;height:22.60px;background:#fff;border:1px solid #ababab;box-sizing:border-box;"></div><div class="t" style="left:987.20px;transform-origin:0 0;top:557.64px;font-size:12.00px;line-height:12.00px;color:#000;font-weight:400;transform:scaleX(0.9417);">KrDocTypeTitle</div><div class="t" style="left:1276.00px;top:535.94px;font-size:12.00px;line-height:12.00px;color:#5f5f5f;font-weight:400;transform-origin:0 0;transform:scaleX(0.9417);">Caption<span style="margin-left:8px;color:#2f7fd8;text-decoration:underline;">?</span></div><div class="r" style="left:1276.00px;top:551.40px;width:293.00px;height:22.60px;background:#fff;border:1px solid #ababab;box-sizing:border-box;"></div><div class="t" style="left:1280.20px;transform-origin:0 0;top:557.64px;font-size:12.00px;line-height:12.00px;color:#000;font-weight:400;transform:scaleX(0.9417);">$Views_KrDocTypes_Name</div><div class="t" style="left:983.00px;top:582.14px;font-size:12.00px;line-height:12.00px;color:#5f5f5f;font-weight:400;transform-origin:0 0;transform:scaleX(0.9833);">Условие<span style="margin-left:8px;color:#2f7fd8;text-decoration:underline;">?</span></div><div class="r" style="left:983.00px;top:597.40px;width:288.00px;height:22.40px;background:#fff;border:1px solid #ababab;box-sizing:border-box;"></div><div class="t" style="left:1276.00px;top:582.14px;font-size:12.00px;line-height:12.00px;color:#5f5f5f;font-weight:400;transform-origin:0 0;transform:scaleX(0.9417);">Type<span style="margin-left:7px">*</span><span style="margin-left:8px;color:#2f7fd8;text-decoration:underline;">?</span></div><div class="r" style="left:1276.00px;top:597.40px;width:267.00px;height:22.40px;background:#fff;border:1px solid #ababab;box-sizing:border-box;"></div><div class="t" style="left:1280.20px;transform-origin:0 0;top:603.64px;font-size:12.00px;line-height:12.00px;color:#000;font-weight:400;transform:scaleX(0.9417);">$KrDocType.Title;</div><div class="r" style="left:1546.00px;top:597.40px;width:23.00px;height:22.40px;background:#dddddd;border:1px solid #6f6f6f;box-sizing:border-box;"></div><svg class="r" style="left:1552px;top:609px" width="12" height="4" viewBox="0 0 12 4" fill="none"><rect x="1.5" y="1.5" width="1.6" height="1.6" fill="#222"/><rect x="5.2" y="1.5" width="1.6" height="1.6" fill="#222"/><rect x="8.9" y="1.5" width="1.6" height="1.6" fill="#222"/></svg><div class="t" style="left:983.00px;top:627.94px;font-size:12.00px;line-height:12.00px;color:#5f5f5f;font-weight:400;transform-origin:0 0;transform:scaleX(0.9417);">SortBy<span style="margin-left:8px;color:#2f7fd8;text-decoration:underline;">?</span></div><div class="r" style="left:983.00px;top:643.40px;width:288.00px;height:22.30px;background:#fff;border:1px solid #ababab;box-sizing:border-box;"></div><div class="t" style="left:987.20px;transform-origin:0 0;top:649.64px;font-size:12.00px;line-height:12.00px;color:#000;font-weight:400;transform:scaleX(0.9417);">lTitle.Value</div><div class="t" style="left:1276.00px;top:627.94px;font-size:12.00px;line-height:12.00px;color:#5f5f5f;font-weight:400;transform-origin:0 0;transform:scaleX(0.9417);">SortByFormat<span style="margin-left:8px;color:#2f7fd8;text-decoration:underline;">?</span></div><div class="r" style="left:1276.00px;top:643.40px;width:293.00px;height:22.30px;background:#fff;border:1px solid #ababab;box-sizing:border-box;"></div><div class="r" style="left:983.60px;top:675.90px;width:14.00px;height:13.00px;background:#fff;border:1px solid #4d4d4d;box-sizing:border-box;"></div><div class="t" style="left:1003.10px;transform-origin:0 0;top:677.04px;font-size:12.00px;line-height:12.00px;color:#111;font-weight:400;transform:scaleX(0.9417);">Hidden</div><div class="r" style="left:983.60px;top:704.10px;width:14.00px;height:13.00px;background:#fff;border:1px solid #4d4d4d;box-sizing:border-box;"></div><svg class="r" style="left:985px;top:705px" width="12" height="11" viewBox="0 0 12 11" fill="none"><path d="M2 5.6l2.8 3.2 5-7.3" stroke="#1a1a1a" stroke-width="1.9" fill="none"/></svg><div class="t" style="left:1003.10px;transform-origin:0 0;top:705.24px;font-size:12.00px;line-height:12.00px;color:#111;font-weight:400;transform:scaleX(0.9417);">Localizable</div><div class="r" style="left:983.60px;top:732.10px;width:14.00px;height:13.00px;background:#fff;border:1px solid #4d4d4d;box-sizing:border-box;"></div><div class="t" style="left:1003.10px;transform-origin:0 0;top:733.24px;font-size:12.00px;line-height:12.00px;color:#111;font-weight:400;transform:scaleX(0.9417);">InvisibleByDefault</div><div class="r" style="left:1277.00px;top:675.90px;width:14.00px;height:13.00px;background:#fff;border:1px solid #4d4d4d;box-sizing:border-box;"></div><div class="t" style="left:1296.50px;transform-origin:0 0;top:677.04px;font-size:12.00px;line-height:12.00px;color:#111;font-weight:400;transform:scaleX(0.9417);">TreatValueAsUtc</div><div class="r" style="left:1277.00px;top:704.10px;width:14.00px;height:13.00px;background:#fff;border:1px solid #4d4d4d;box-sizing:border-box;"></div><div class="t" style="left:1296.50px;transform-origin:0 0;top:705.24px;font-size:12.00px;line-height:12.00px;color:#111;font-weight:400;transform:scaleX(0.9417);">DisableGrouping</div><div class="t" style="left:983.00px;top:758.44px;font-size:12.00px;line-height:12.00px;color:#5f5f5f;font-weight:400;transform-origin:0 0;transform:scaleX(0.9417);">Appearance<span style="margin-left:8px;color:#2f7fd8;text-decoration:underline;">?</span></div><div class="r" style="left:983.00px;top:773.50px;width:288.00px;height:22.00px;background:#fff;border:1px solid #ababab;box-sizing:border-box;"></div><div class="t" style="left:1276.00px;top:758.44px;font-size:12.00px;line-height:12.00px;color:#5f5f5f;font-weight:400;transform-origin:0 0;transform:scaleX(0.9417);">MaxLength<span style="margin-left:8px;color:#2f7fd8;text-decoration:underline;">?</span></div><div class="r" style="left:1276.00px;top:773.50px;width:293.00px;height:22.00px;background:#fff;border:1px solid #ababab;box-sizing:border-box;"></div><div class="t" style="left:983.00px;top:803.24px;font-size:12.00px;line-height:12.00px;color:#5f5f5f;font-weight:400;transform-origin:0 0;transform:scaleX(0.9417);">NullValue<span style="margin-left:8px;color:#2f7fd8;text-decoration:underline;">?</span></div><div class="r" style="left:983.00px;top:818.70px;width:288.00px;height:21.60px;background:#fff;border:1px solid #ababab;box-sizing:border-box;"></div><div class="t" style="left:983.00px;top:849.24px;font-size:12.00px;line-height:12.00px;color:#5f5f5f;font-weight:400;transform-origin:0 0;transform:scaleX(0.9417);">FilterType<span style="margin-left:8px;color:#2f7fd8;text-decoration:underline;">?</span></div><div class="r" style="left:983.00px;top:864.30px;width:236.00px;height:22.00px;background:#fff;border:1px solid #ababab;box-sizing:border-box;"></div><div class="t" style="left:987.20px;transform-origin:0 0;top:870.54px;font-size:12.00px;line-height:12.00px;color:#000;font-weight:400;transform:scaleX(0.9417);">Parameter;</div><div class="r" style="left:1222.50px;top:864.30px;width:22.50px;height:22.00px;background:#dddddd;border:1px solid #6f6f6f;box-sizing:border-box;"></div><svg class="r" style="left:1228px;top:867px" width="12" height="16" viewBox="0 0 12 16" fill="none"><path d="M6 1.5v13M1 9.5l5 5 5-5" stroke="#333" stroke-width="1.1" fill="none"/></svg><div class="r" style="left:1248.50px;top:864.30px;width:22.50px;height:22.00px;background:#dddddd;border:1px solid #6f6f6f;box-sizing:border-box;"></div><svg class="r" style="left:1254px;top:875px" width="12" height="4" viewBox="0 0 12 4" fill="none"><rect x="1.5" y="1.5" width="1.6" height="1.6" fill="#222"/><rect x="5.2" y="1.5" width="1.6" height="1.6" fill="#222"/><rect x="8.9" y="1.5" width="1.6" height="1.6" fill="#222"/></svg><div class="t" style="left:1276.00px;top:849.24px;font-size:12.00px;line-height:12.00px;color:#5f5f5f;font-weight:400;transform-origin:0 0;transform:scaleX(0.9417);">FilterParameter<span style="margin-left:8px;color:#2f7fd8;text-decoration:underline;">?</span></div><div class="r" style="left:1276.00px;top:864.30px;width:240.50px;height:22.00px;background:#fff;border:1px solid #ababab;box-sizing:border-box;"></div><div class="t" style="left:1280.20px;transform-origin:0 0;top:870.54px;font-size:12.00px;line-height:12.00px;color:#000;font-weight:400;transform:scaleX(0.9417);">Name;</div><div class="r" style="left:1520.00px;top:864.30px;width:22.50px;height:22.00px;background:#dddddd;border:1px solid #6f6f6f;box-sizing:border-box;"></div><svg class="r" style="left:1525px;top:867px" width="12" height="16" viewBox="0 0 12 16" fill="none"><path d="M6 1.5v13M1 9.5l5 5 5-5" stroke="#333" stroke-width="1.1" fill="none"/></svg><div class="r" style="left:1546.00px;top:864.30px;width:23.00px;height:22.00px;background:#dddddd;border:1px solid #6f6f6f;box-sizing:border-box;"></div><svg class="r" style="left:1552px;top:875px" width="12" height="4" viewBox="0 0 12 4" fill="none"><rect x="1.5" y="1.5" width="1.6" height="1.6" fill="#222"/><rect x="5.2" y="1.5" width="1.6" height="1.6" fill="#222"/><rect x="8.9" y="1.5" width="1.6" height="1.6" fill="#222"/></svg><div class="r" style="left:986.4px;top:901.5px;width:579.1px;height:16px;display:flex;align-items:center;"><div style="width:19px;height:1px;background:#a3a3a3;flex:none"></div><div style="margin:0 5px;font-size:11.8px;line-height:16px;color:#222;white-space:nowrap;flex:none">CalendarOverdueColumnInfo</div><div style="flex:1;height:1px;background:#a3a3a3"></div></div><div class="r" style="left:986.4px;top:935px;width:579.1px;height:16px;display:flex;align-items:center;"><div style="width:19px;height:1px;background:#a3a3a3;flex:none"></div><div style="margin:0 5px;font-size:11.8px;line-height:16px;color:#222;white-space:nowrap;flex:none">NormalizationColumnInfo</div><div style="flex:1;height:1px;background:#a3a3a3"></div></div></body></html>
